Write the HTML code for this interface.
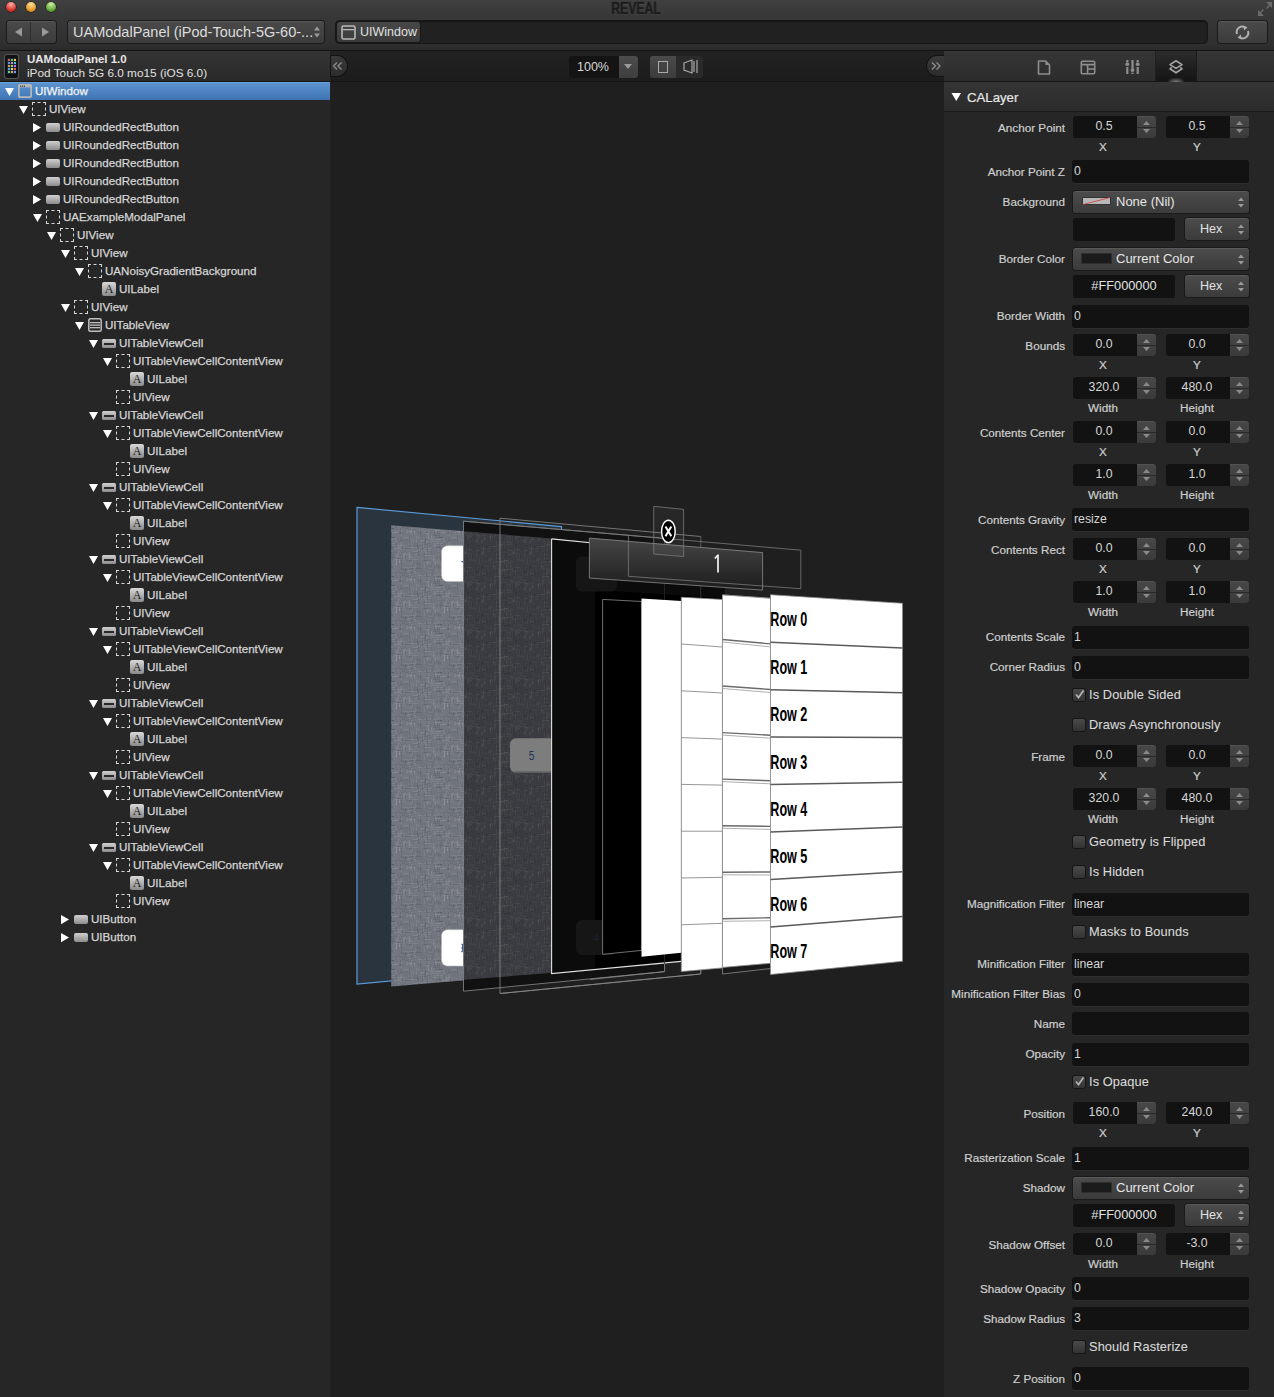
<!DOCTYPE html><html><head><meta charset="utf-8"><style>
*{margin:0;padding:0;box-sizing:border-box}
html,body{width:1274px;height:1397px;overflow:hidden;background:#1e1e1e;font-family:"Liberation Sans",sans-serif;position:relative}
.a{position:absolute}
.t{position:absolute;white-space:nowrap;line-height:1}
</style></head><body><div class="a" style="left:0;top:0;width:1274px;height:51px;background:linear-gradient(#404040,#383838 30%,#2f2f2f 90%,#2a2a2a);border-bottom:1px solid #141414"></div><div class="a" style="left:5.7px;top:1.6px;width:10.6px;height:10.6px;border-radius:50%;background:radial-gradient(circle at 50% 22%,#ffb0a8,#d0281e 72%);box-shadow:0 0 0 0.6px rgba(0,0,0,0.55)"></div><div class="a" style="left:25.7px;top:1.6px;width:10.6px;height:10.6px;border-radius:50%;background:radial-gradient(circle at 50% 22%,#ffe3a0,#e0901c 72%);box-shadow:0 0 0 0.6px rgba(0,0,0,0.55)"></div><div class="a" style="left:45.7px;top:1.6px;width:10.6px;height:10.6px;border-radius:50%;background:radial-gradient(circle at 50% 22%,#d0f0a8,#58a02e 72%);box-shadow:0 0 0 0.6px rgba(0,0,0,0.55)"></div><div class="t" style="left:596px;top:0px;width:80px;text-align:center;font-size:16.5px;font-weight:bold;color:#1c1c1c;-webkit-text-stroke:0.5px #1c1c1c;transform:scaleX(0.74);text-shadow:0 1px 0 rgba(255,255,255,0.10)">REVEAL</div><svg class="a" style="left:1257px;top:1px" width="16" height="16" viewBox="0 0 16 16"><g fill="#6a6a6a"><path d="M9 1h6v6l-2-2-3 3-1-1 3-3z"/><path d="M7 15H1V9l2 2 3-3 1 1-3 3z"/></g></svg><div class="a" style="left:7px;top:21px;width:49px;height:22px;border-radius:3px;background:linear-gradient(#4a4a4a,#3c3c3c);box-shadow:0 0 0 1px #1a1a1a,inset 0 1px 0 rgba(255,255,255,0.08)"></div><div class="a" style="left:30px;top:22px;width:1px;height:20px;background:#2e2e2e"></div><svg class="a" style="left:14px;top:26px" width="12" height="12"><path d="M1 6L8 1.5V10.5z" fill="#9a9a9a"/></svg><svg class="a" style="left:39px;top:26px" width="12" height="12"><path d="M10 6L3 1.5V10.5z" fill="#9a9a9a"/></svg><div class="a" style="left:68px;top:21px;width:256px;height:22px;border-radius:3px;background:linear-gradient(#4a4a4a,#3c3c3c);box-shadow:0 0 0 1px #1a1a1a,inset 0 1px 0 rgba(255,255,255,0.08)"></div><div class="t" style="left:73px;top:24.5px;font-size:14.5px;color:#dcdcdc">UAModalPanel (iPod-Touch-5G-60-...</div><svg class="a" style="left:313px;top:25px" width="8" height="14"><path d="M1 5.5L4 1.5 7 5.5zM1 8.5L4 12.5 7 8.5z" fill="#9a9a9a"/></svg><div class="a" style="left:336px;top:21px;width:871px;height:22px;border-radius:4px;background:#212121;box-shadow:0 0 0 1px #161616,inset 0 1px 1px rgba(0,0,0,0.4)"></div><div class="a" style="left:337px;top:22px;width:83px;height:20px;border-radius:3px;background:linear-gradient(#474747,#3b3b3b);box-shadow:0 0 0 1px #181818"></div><svg class="a" style="left:341px;top:25px" width="15" height="15" viewBox="0 0 15 15"><rect x="1" y="1" width="13" height="13" rx="1.5" fill="none" stroke="#b8b8b8" stroke-width="1.6"/><rect x="2" y="4" width="11" height="1.3" fill="#b8b8b8"/></svg><div class="t" style="left:360px;top:26px;font-size:12.5px;color:#e0e0e0">UIWindow</div><div class="a" style="left:1218px;top:21px;width:49px;height:22px;border-radius:3px;background:linear-gradient(#4a4a4a,#3c3c3c);box-shadow:0 0 0 1px #1a1a1a,inset 0 1px 0 rgba(255,255,255,0.08)"></div><svg class="a" style="left:1234px;top:24px" width="17" height="17" viewBox="0 0 17 17"><path d="M3 10A5.5 5.5 0 0 1 11.5 3.8" fill="none" stroke="#b0b0b0" stroke-width="2"/><path d="M14 7A5.5 5.5 0 0 1 5.5 13.2" fill="none" stroke="#b0b0b0" stroke-width="2"/><path d="M9.5 1.5L13.5 3.5 10 6.5z" fill="#b0b0b0"/><path d="M7.5 15.5L3.5 13.5 7 10.5z" fill="#b0b0b0"/></svg><div class="a" style="left:0;top:51px;width:330px;height:1346px;background:#262626"></div><div class="a" style="left:0;top:51px;width:330px;height:31px;background:linear-gradient(#343434,#2a2a2a);border-bottom:1px solid #171717"></div><div class="a" style="left:5px;top:55px;width:13px;height:23px;border-radius:2px;background:#111;box-shadow:0 0 0 1px #555"></div><div class="a" style="left:7px;top:58px;width:9px;height:16px;background:#1a2a3a"></div><div class="a" style="left:7.5px;top:59px;width:2px;height:2px;background:#e55"></div><div class="a" style="left:10.5px;top:59px;width:2px;height:2px;background:#5c5"></div><div class="a" style="left:13.5px;top:59px;width:2px;height:2px;background:#fc4"></div><div class="a" style="left:7.5px;top:62px;width:2px;height:2px;background:#59e"></div><div class="a" style="left:10.5px;top:62px;width:2px;height:2px;background:#e8a"></div><div class="a" style="left:13.5px;top:62px;width:2px;height:2px;background:#4cd"></div><div class="a" style="left:7.5px;top:65px;width:2px;height:2px;background:#f94"></div><div class="a" style="left:10.5px;top:65px;width:2px;height:2px;background:#9d5"></div><div class="a" style="left:13.5px;top:65px;width:2px;height:2px;background:#c6f"></div><div class="a" style="left:7.5px;top:68px;width:2px;height:2px;background:#5ae"></div><div class="a" style="left:10.5px;top:68px;width:2px;height:2px;background:#ed5"></div><div class="a" style="left:13.5px;top:68px;width:2px;height:2px;background:#e64"></div><div class="a" style="left:7.5px;top:71px;width:2px;height:2px;background:#6d9"></div><div class="a" style="left:10.5px;top:71px;width:2px;height:2px;background:#fa3"></div><div class="a" style="left:13.5px;top:71px;width:2px;height:2px;background:#79f"></div><div class="t" style="left:27px;top:54px;font-size:11.5px;font-weight:bold;color:#e6e6e6">UAModalPanel 1.0</div><div class="t" style="left:27px;top:68px;font-size:11.8px;color:#e0e0e0">iPod Touch 5G 6.0 mo15 (iOS 6.0)</div><div class="a" style="left:0;top:82px;width:330px;height:18px;background:linear-gradient(#5b93cf,#3f74b4);border-top:1px solid #6aa2dc"></div><svg class="a" style="left:5px;top:87px" width="10" height="10"><path d="M0 1H9L4.5 9z" fill="#fff"/></svg><svg class="a" style="left:18px;top:84px" width="14" height="14" viewBox="0 0 14 14"><rect x="0.8" y="0.8" width="12.4" height="12.4" rx="1.5" fill="none" stroke="#b8b8b8" stroke-width="1.8"/><rect x="1" y="1" width="12" height="2.4" fill="#b8b8b8"/><circle cx="2.8" cy="2.2" r="0.6" fill="#222"/><circle cx="4.6" cy="2.2" r="0.6" fill="#222"/><circle cx="6.4" cy="2.2" r="0.6" fill="#222"/></svg><div class="t" style="left:35px;top:85.4px;font-size:11.6px;letter-spacing:0px;color:#f4f4f4;-webkit-text-stroke:0.25px #f4f4f4">UIWindow</div><svg class="a" style="left:19px;top:105px" width="10" height="10"><path d="M0 1H9L4.5 9z" fill="#fff"/></svg><div class="a" style="left:32px;top:102px;width:14px;height:14px;border:1px dashed #d8d8d8"></div><div class="t" style="left:49px;top:103.4px;font-size:11.6px;letter-spacing:0px;color:#d6d6d6;-webkit-text-stroke:0.25px #d6d6d6">UIView</div><svg class="a" style="left:33px;top:123px" width="10" height="10"><path d="M0 0V9.2L8 4.6z" fill="#fff"/></svg><div class="a" style="left:46px;top:123px;width:14px;height:9px;border-radius:2px;background:linear-gradient(#cfcfcf,#8c8c8c)"></div><div class="t" style="left:63px;top:121.4px;font-size:11.6px;letter-spacing:0px;color:#d6d6d6;-webkit-text-stroke:0.25px #d6d6d6">UIRoundedRectButton</div><svg class="a" style="left:33px;top:141px" width="10" height="10"><path d="M0 0V9.2L8 4.6z" fill="#fff"/></svg><div class="a" style="left:46px;top:141px;width:14px;height:9px;border-radius:2px;background:linear-gradient(#cfcfcf,#8c8c8c)"></div><div class="t" style="left:63px;top:139.4px;font-size:11.6px;letter-spacing:0px;color:#d6d6d6;-webkit-text-stroke:0.25px #d6d6d6">UIRoundedRectButton</div><svg class="a" style="left:33px;top:159px" width="10" height="10"><path d="M0 0V9.2L8 4.6z" fill="#fff"/></svg><div class="a" style="left:46px;top:159px;width:14px;height:9px;border-radius:2px;background:linear-gradient(#cfcfcf,#8c8c8c)"></div><div class="t" style="left:63px;top:157.4px;font-size:11.6px;letter-spacing:0px;color:#d6d6d6;-webkit-text-stroke:0.25px #d6d6d6">UIRoundedRectButton</div><svg class="a" style="left:33px;top:177px" width="10" height="10"><path d="M0 0V9.2L8 4.6z" fill="#fff"/></svg><div class="a" style="left:46px;top:177px;width:14px;height:9px;border-radius:2px;background:linear-gradient(#cfcfcf,#8c8c8c)"></div><div class="t" style="left:63px;top:175.4px;font-size:11.6px;letter-spacing:0px;color:#d6d6d6;-webkit-text-stroke:0.25px #d6d6d6">UIRoundedRectButton</div><svg class="a" style="left:33px;top:195px" width="10" height="10"><path d="M0 0V9.2L8 4.6z" fill="#fff"/></svg><div class="a" style="left:46px;top:195px;width:14px;height:9px;border-radius:2px;background:linear-gradient(#cfcfcf,#8c8c8c)"></div><div class="t" style="left:63px;top:193.4px;font-size:11.6px;letter-spacing:0px;color:#d6d6d6;-webkit-text-stroke:0.25px #d6d6d6">UIRoundedRectButton</div><svg class="a" style="left:33px;top:213px" width="10" height="10"><path d="M0 1H9L4.5 9z" fill="#fff"/></svg><div class="a" style="left:46px;top:210px;width:14px;height:14px;border:1px dashed #d8d8d8"></div><div class="t" style="left:63px;top:211.4px;font-size:11.6px;letter-spacing:0px;color:#d6d6d6;-webkit-text-stroke:0.25px #d6d6d6">UAExampleModalPanel</div><svg class="a" style="left:47px;top:231px" width="10" height="10"><path d="M0 1H9L4.5 9z" fill="#fff"/></svg><div class="a" style="left:60px;top:228px;width:14px;height:14px;border:1px dashed #d8d8d8"></div><div class="t" style="left:77px;top:229.4px;font-size:11.6px;letter-spacing:0px;color:#d6d6d6;-webkit-text-stroke:0.25px #d6d6d6">UIView</div><svg class="a" style="left:61px;top:249px" width="10" height="10"><path d="M0 1H9L4.5 9z" fill="#fff"/></svg><div class="a" style="left:74px;top:246px;width:14px;height:14px;border:1px dashed #d8d8d8"></div><div class="t" style="left:91px;top:247.4px;font-size:11.6px;letter-spacing:0px;color:#d6d6d6;-webkit-text-stroke:0.25px #d6d6d6">UIView</div><svg class="a" style="left:75px;top:267px" width="10" height="10"><path d="M0 1H9L4.5 9z" fill="#fff"/></svg><div class="a" style="left:88px;top:264px;width:14px;height:14px;border:1px dashed #d8d8d8"></div><div class="t" style="left:105px;top:265.4px;font-size:11.6px;letter-spacing:0px;color:#d6d6d6;-webkit-text-stroke:0.25px #d6d6d6">UANoisyGradientBackground</div><div class="a" style="left:102px;top:282px;width:14px;height:14px;border-radius:2px;background:linear-gradient(#d8d8d8,#8a8a8a)"></div><div class="t" style="left:104px;top:283px;width:10px;text-align:center;font-family:'Liberation Serif',serif;font-size:12px;color:#202020">A</div><div class="t" style="left:119px;top:283.4px;font-size:11.6px;letter-spacing:0px;color:#d6d6d6;-webkit-text-stroke:0.25px #d6d6d6">UILabel</div><svg class="a" style="left:61px;top:303px" width="10" height="10"><path d="M0 1H9L4.5 9z" fill="#fff"/></svg><div class="a" style="left:74px;top:300px;width:14px;height:14px;border:1px dashed #d8d8d8"></div><div class="t" style="left:91px;top:301.4px;font-size:11.6px;letter-spacing:0px;color:#d6d6d6;-webkit-text-stroke:0.25px #d6d6d6">UIView</div><svg class="a" style="left:75px;top:321px" width="10" height="10"><path d="M0 1H9L4.5 9z" fill="#fff"/></svg><svg class="a" style="left:88px;top:318px" width="14" height="14" viewBox="0 0 14 14"><rect x="0.8" y="0.8" width="12.4" height="12.4" rx="1.5" fill="#2a2a2a" stroke="#bdbdbd" stroke-width="1.5"/><rect x="2" y="4" width="10" height="1.3" fill="#bdbdbd"/><rect x="2" y="6.5" width="10" height="1.3" fill="#bdbdbd"/><rect x="2" y="9" width="10" height="1.3" fill="#bdbdbd"/></svg><div class="t" style="left:105px;top:319.4px;font-size:11.6px;letter-spacing:0px;color:#d6d6d6;-webkit-text-stroke:0.25px #d6d6d6">UITableView</div><svg class="a" style="left:89px;top:339px" width="10" height="10"><path d="M0 1H9L4.5 9z" fill="#fff"/></svg><div class="a" style="left:102px;top:339px;width:14px;height:9px;border-radius:1.5px;background:linear-gradient(#cfcfcf,#8c8c8c)"></div><div class="a" style="left:104px;top:342.5px;width:10px;height:2px;background:#2a2a2a"></div><div class="t" style="left:119px;top:337.4px;font-size:11.6px;letter-spacing:0px;color:#d6d6d6;-webkit-text-stroke:0.25px #d6d6d6">UITableViewCell</div><svg class="a" style="left:103px;top:357px" width="10" height="10"><path d="M0 1H9L4.5 9z" fill="#fff"/></svg><div class="a" style="left:116px;top:354px;width:14px;height:14px;border:1px dashed #d8d8d8"></div><div class="t" style="left:133px;top:355.4px;font-size:11.6px;letter-spacing:0px;color:#d6d6d6;-webkit-text-stroke:0.25px #d6d6d6">UITableViewCellContentView</div><div class="a" style="left:130px;top:372px;width:14px;height:14px;border-radius:2px;background:linear-gradient(#d8d8d8,#8a8a8a)"></div><div class="t" style="left:132px;top:373px;width:10px;text-align:center;font-family:'Liberation Serif',serif;font-size:12px;color:#202020">A</div><div class="t" style="left:147px;top:373.4px;font-size:11.6px;letter-spacing:0px;color:#d6d6d6;-webkit-text-stroke:0.25px #d6d6d6">UILabel</div><div class="a" style="left:116px;top:390px;width:14px;height:14px;border:1px dashed #d8d8d8"></div><div class="t" style="left:133px;top:391.4px;font-size:11.6px;letter-spacing:0px;color:#d6d6d6;-webkit-text-stroke:0.25px #d6d6d6">UIView</div><svg class="a" style="left:89px;top:411px" width="10" height="10"><path d="M0 1H9L4.5 9z" fill="#fff"/></svg><div class="a" style="left:102px;top:411px;width:14px;height:9px;border-radius:1.5px;background:linear-gradient(#cfcfcf,#8c8c8c)"></div><div class="a" style="left:104px;top:414.5px;width:10px;height:2px;background:#2a2a2a"></div><div class="t" style="left:119px;top:409.4px;font-size:11.6px;letter-spacing:0px;color:#d6d6d6;-webkit-text-stroke:0.25px #d6d6d6">UITableViewCell</div><svg class="a" style="left:103px;top:429px" width="10" height="10"><path d="M0 1H9L4.5 9z" fill="#fff"/></svg><div class="a" style="left:116px;top:426px;width:14px;height:14px;border:1px dashed #d8d8d8"></div><div class="t" style="left:133px;top:427.4px;font-size:11.6px;letter-spacing:0px;color:#d6d6d6;-webkit-text-stroke:0.25px #d6d6d6">UITableViewCellContentView</div><div class="a" style="left:130px;top:444px;width:14px;height:14px;border-radius:2px;background:linear-gradient(#d8d8d8,#8a8a8a)"></div><div class="t" style="left:132px;top:445px;width:10px;text-align:center;font-family:'Liberation Serif',serif;font-size:12px;color:#202020">A</div><div class="t" style="left:147px;top:445.4px;font-size:11.6px;letter-spacing:0px;color:#d6d6d6;-webkit-text-stroke:0.25px #d6d6d6">UILabel</div><div class="a" style="left:116px;top:462px;width:14px;height:14px;border:1px dashed #d8d8d8"></div><div class="t" style="left:133px;top:463.4px;font-size:11.6px;letter-spacing:0px;color:#d6d6d6;-webkit-text-stroke:0.25px #d6d6d6">UIView</div><svg class="a" style="left:89px;top:483px" width="10" height="10"><path d="M0 1H9L4.5 9z" fill="#fff"/></svg><div class="a" style="left:102px;top:483px;width:14px;height:9px;border-radius:1.5px;background:linear-gradient(#cfcfcf,#8c8c8c)"></div><div class="a" style="left:104px;top:486.5px;width:10px;height:2px;background:#2a2a2a"></div><div class="t" style="left:119px;top:481.4px;font-size:11.6px;letter-spacing:0px;color:#d6d6d6;-webkit-text-stroke:0.25px #d6d6d6">UITableViewCell</div><svg class="a" style="left:103px;top:501px" width="10" height="10"><path d="M0 1H9L4.5 9z" fill="#fff"/></svg><div class="a" style="left:116px;top:498px;width:14px;height:14px;border:1px dashed #d8d8d8"></div><div class="t" style="left:133px;top:499.4px;font-size:11.6px;letter-spacing:0px;color:#d6d6d6;-webkit-text-stroke:0.25px #d6d6d6">UITableViewCellContentView</div><div class="a" style="left:130px;top:516px;width:14px;height:14px;border-radius:2px;background:linear-gradient(#d8d8d8,#8a8a8a)"></div><div class="t" style="left:132px;top:517px;width:10px;text-align:center;font-family:'Liberation Serif',serif;font-size:12px;color:#202020">A</div><div class="t" style="left:147px;top:517.4px;font-size:11.6px;letter-spacing:0px;color:#d6d6d6;-webkit-text-stroke:0.25px #d6d6d6">UILabel</div><div class="a" style="left:116px;top:534px;width:14px;height:14px;border:1px dashed #d8d8d8"></div><div class="t" style="left:133px;top:535.4px;font-size:11.6px;letter-spacing:0px;color:#d6d6d6;-webkit-text-stroke:0.25px #d6d6d6">UIView</div><svg class="a" style="left:89px;top:555px" width="10" height="10"><path d="M0 1H9L4.5 9z" fill="#fff"/></svg><div class="a" style="left:102px;top:555px;width:14px;height:9px;border-radius:1.5px;background:linear-gradient(#cfcfcf,#8c8c8c)"></div><div class="a" style="left:104px;top:558.5px;width:10px;height:2px;background:#2a2a2a"></div><div class="t" style="left:119px;top:553.4px;font-size:11.6px;letter-spacing:0px;color:#d6d6d6;-webkit-text-stroke:0.25px #d6d6d6">UITableViewCell</div><svg class="a" style="left:103px;top:573px" width="10" height="10"><path d="M0 1H9L4.5 9z" fill="#fff"/></svg><div class="a" style="left:116px;top:570px;width:14px;height:14px;border:1px dashed #d8d8d8"></div><div class="t" style="left:133px;top:571.4px;font-size:11.6px;letter-spacing:0px;color:#d6d6d6;-webkit-text-stroke:0.25px #d6d6d6">UITableViewCellContentView</div><div class="a" style="left:130px;top:588px;width:14px;height:14px;border-radius:2px;background:linear-gradient(#d8d8d8,#8a8a8a)"></div><div class="t" style="left:132px;top:589px;width:10px;text-align:center;font-family:'Liberation Serif',serif;font-size:12px;color:#202020">A</div><div class="t" style="left:147px;top:589.4px;font-size:11.6px;letter-spacing:0px;color:#d6d6d6;-webkit-text-stroke:0.25px #d6d6d6">UILabel</div><div class="a" style="left:116px;top:606px;width:14px;height:14px;border:1px dashed #d8d8d8"></div><div class="t" style="left:133px;top:607.4px;font-size:11.6px;letter-spacing:0px;color:#d6d6d6;-webkit-text-stroke:0.25px #d6d6d6">UIView</div><svg class="a" style="left:89px;top:627px" width="10" height="10"><path d="M0 1H9L4.5 9z" fill="#fff"/></svg><div class="a" style="left:102px;top:627px;width:14px;height:9px;border-radius:1.5px;background:linear-gradient(#cfcfcf,#8c8c8c)"></div><div class="a" style="left:104px;top:630.5px;width:10px;height:2px;background:#2a2a2a"></div><div class="t" style="left:119px;top:625.4px;font-size:11.6px;letter-spacing:0px;color:#d6d6d6;-webkit-text-stroke:0.25px #d6d6d6">UITableViewCell</div><svg class="a" style="left:103px;top:645px" width="10" height="10"><path d="M0 1H9L4.5 9z" fill="#fff"/></svg><div class="a" style="left:116px;top:642px;width:14px;height:14px;border:1px dashed #d8d8d8"></div><div class="t" style="left:133px;top:643.4px;font-size:11.6px;letter-spacing:0px;color:#d6d6d6;-webkit-text-stroke:0.25px #d6d6d6">UITableViewCellContentView</div><div class="a" style="left:130px;top:660px;width:14px;height:14px;border-radius:2px;background:linear-gradient(#d8d8d8,#8a8a8a)"></div><div class="t" style="left:132px;top:661px;width:10px;text-align:center;font-family:'Liberation Serif',serif;font-size:12px;color:#202020">A</div><div class="t" style="left:147px;top:661.4px;font-size:11.6px;letter-spacing:0px;color:#d6d6d6;-webkit-text-stroke:0.25px #d6d6d6">UILabel</div><div class="a" style="left:116px;top:678px;width:14px;height:14px;border:1px dashed #d8d8d8"></div><div class="t" style="left:133px;top:679.4px;font-size:11.6px;letter-spacing:0px;color:#d6d6d6;-webkit-text-stroke:0.25px #d6d6d6">UIView</div><svg class="a" style="left:89px;top:699px" width="10" height="10"><path d="M0 1H9L4.5 9z" fill="#fff"/></svg><div class="a" style="left:102px;top:699px;width:14px;height:9px;border-radius:1.5px;background:linear-gradient(#cfcfcf,#8c8c8c)"></div><div class="a" style="left:104px;top:702.5px;width:10px;height:2px;background:#2a2a2a"></div><div class="t" style="left:119px;top:697.4px;font-size:11.6px;letter-spacing:0px;color:#d6d6d6;-webkit-text-stroke:0.25px #d6d6d6">UITableViewCell</div><svg class="a" style="left:103px;top:717px" width="10" height="10"><path d="M0 1H9L4.5 9z" fill="#fff"/></svg><div class="a" style="left:116px;top:714px;width:14px;height:14px;border:1px dashed #d8d8d8"></div><div class="t" style="left:133px;top:715.4px;font-size:11.6px;letter-spacing:0px;color:#d6d6d6;-webkit-text-stroke:0.25px #d6d6d6">UITableViewCellContentView</div><div class="a" style="left:130px;top:732px;width:14px;height:14px;border-radius:2px;background:linear-gradient(#d8d8d8,#8a8a8a)"></div><div class="t" style="left:132px;top:733px;width:10px;text-align:center;font-family:'Liberation Serif',serif;font-size:12px;color:#202020">A</div><div class="t" style="left:147px;top:733.4px;font-size:11.6px;letter-spacing:0px;color:#d6d6d6;-webkit-text-stroke:0.25px #d6d6d6">UILabel</div><div class="a" style="left:116px;top:750px;width:14px;height:14px;border:1px dashed #d8d8d8"></div><div class="t" style="left:133px;top:751.4px;font-size:11.6px;letter-spacing:0px;color:#d6d6d6;-webkit-text-stroke:0.25px #d6d6d6">UIView</div><svg class="a" style="left:89px;top:771px" width="10" height="10"><path d="M0 1H9L4.5 9z" fill="#fff"/></svg><div class="a" style="left:102px;top:771px;width:14px;height:9px;border-radius:1.5px;background:linear-gradient(#cfcfcf,#8c8c8c)"></div><div class="a" style="left:104px;top:774.5px;width:10px;height:2px;background:#2a2a2a"></div><div class="t" style="left:119px;top:769.4px;font-size:11.6px;letter-spacing:0px;color:#d6d6d6;-webkit-text-stroke:0.25px #d6d6d6">UITableViewCell</div><svg class="a" style="left:103px;top:789px" width="10" height="10"><path d="M0 1H9L4.5 9z" fill="#fff"/></svg><div class="a" style="left:116px;top:786px;width:14px;height:14px;border:1px dashed #d8d8d8"></div><div class="t" style="left:133px;top:787.4px;font-size:11.6px;letter-spacing:0px;color:#d6d6d6;-webkit-text-stroke:0.25px #d6d6d6">UITableViewCellContentView</div><div class="a" style="left:130px;top:804px;width:14px;height:14px;border-radius:2px;background:linear-gradient(#d8d8d8,#8a8a8a)"></div><div class="t" style="left:132px;top:805px;width:10px;text-align:center;font-family:'Liberation Serif',serif;font-size:12px;color:#202020">A</div><div class="t" style="left:147px;top:805.4px;font-size:11.6px;letter-spacing:0px;color:#d6d6d6;-webkit-text-stroke:0.25px #d6d6d6">UILabel</div><div class="a" style="left:116px;top:822px;width:14px;height:14px;border:1px dashed #d8d8d8"></div><div class="t" style="left:133px;top:823.4px;font-size:11.6px;letter-spacing:0px;color:#d6d6d6;-webkit-text-stroke:0.25px #d6d6d6">UIView</div><svg class="a" style="left:89px;top:843px" width="10" height="10"><path d="M0 1H9L4.5 9z" fill="#fff"/></svg><div class="a" style="left:102px;top:843px;width:14px;height:9px;border-radius:1.5px;background:linear-gradient(#cfcfcf,#8c8c8c)"></div><div class="a" style="left:104px;top:846.5px;width:10px;height:2px;background:#2a2a2a"></div><div class="t" style="left:119px;top:841.4px;font-size:11.6px;letter-spacing:0px;color:#d6d6d6;-webkit-text-stroke:0.25px #d6d6d6">UITableViewCell</div><svg class="a" style="left:103px;top:861px" width="10" height="10"><path d="M0 1H9L4.5 9z" fill="#fff"/></svg><div class="a" style="left:116px;top:858px;width:14px;height:14px;border:1px dashed #d8d8d8"></div><div class="t" style="left:133px;top:859.4px;font-size:11.6px;letter-spacing:0px;color:#d6d6d6;-webkit-text-stroke:0.25px #d6d6d6">UITableViewCellContentView</div><div class="a" style="left:130px;top:876px;width:14px;height:14px;border-radius:2px;background:linear-gradient(#d8d8d8,#8a8a8a)"></div><div class="t" style="left:132px;top:877px;width:10px;text-align:center;font-family:'Liberation Serif',serif;font-size:12px;color:#202020">A</div><div class="t" style="left:147px;top:877.4px;font-size:11.6px;letter-spacing:0px;color:#d6d6d6;-webkit-text-stroke:0.25px #d6d6d6">UILabel</div><div class="a" style="left:116px;top:894px;width:14px;height:14px;border:1px dashed #d8d8d8"></div><div class="t" style="left:133px;top:895.4px;font-size:11.6px;letter-spacing:0px;color:#d6d6d6;-webkit-text-stroke:0.25px #d6d6d6">UIView</div><svg class="a" style="left:61px;top:915px" width="10" height="10"><path d="M0 0V9.2L8 4.6z" fill="#fff"/></svg><div class="a" style="left:74px;top:915px;width:14px;height:9px;border-radius:2px;background:linear-gradient(#cfcfcf,#8c8c8c)"></div><div class="t" style="left:91px;top:913.4px;font-size:11.6px;letter-spacing:0px;color:#d6d6d6;-webkit-text-stroke:0.25px #d6d6d6">UIButton</div><svg class="a" style="left:61px;top:933px" width="10" height="10"><path d="M0 0V9.2L8 4.6z" fill="#fff"/></svg><div class="a" style="left:74px;top:933px;width:14px;height:9px;border-radius:2px;background:linear-gradient(#cfcfcf,#8c8c8c)"></div><div class="t" style="left:91px;top:931.4px;font-size:11.6px;letter-spacing:0px;color:#d6d6d6;-webkit-text-stroke:0.25px #d6d6d6">UIButton</div><div class="a" style="left:330px;top:51px;width:614px;height:1346px;background:#1f1f1f;box-shadow:inset 1px 0 0 #222"></div><div class="a" style="left:331px;top:51px;width:613px;height:31px;background:linear-gradient(#222,#1c1c1c);border-bottom:1px solid #151515"></div><div class="a" style="left:331px;top:56px;width:16px;height:20px;border-radius:0 10px 10px 0;background:linear-gradient(#3a3a3a,#2c2c2c);box-shadow:0 0 0 1px #121212"></div><svg class="a" style="left:332px;top:61px" width="12" height="10"><path d="M5 1.5L1.5 5 5 8.5M9.5 1.5L6 5 9.5 8.5" fill="none" stroke="#8c8c8c" stroke-width="1.4"/></svg><div class="a" style="left:927px;top:56px;width:17px;height:20px;border-radius:10px 0 0 10px;background:linear-gradient(#3a3a3a,#2c2c2c);box-shadow:0 0 0 1px #121212"></div><svg class="a" style="left:930px;top:61px" width="12" height="10"><path d="M2 1.5L5.5 5 2 8.5M6.5 1.5L10 5 6.5 8.5" fill="none" stroke="#8c8c8c" stroke-width="1.4"/></svg><div class="a" style="left:569px;top:56px;width:69px;height:22px;border-radius:3px;background:#141414"></div><div class="a" style="left:619px;top:56px;width:19px;height:22px;border-radius:0 3px 3px 0;background:linear-gradient(#4c4c4c,#3e3e3e)"></div><svg class="a" style="left:623px;top:63px" width="10" height="8"><path d="M1 1H9L5 6z" fill="#9a9a9a"/></svg><div class="t" style="left:577px;top:61px;font-size:12.5px;color:#d8d8d8">100%</div><div class="a" style="left:650px;top:56px;width:53px;height:22px;border-radius:3px;background:#2a2a2a"></div><div class="a" style="left:650px;top:56px;width:26px;height:22px;border-radius:3px 0 0 3px;background:linear-gradient(#4a4a4a,#3c3c3c)"></div><div class="a" style="left:658px;top:61px;width:10px;height:12px;border:1.3px solid #aaa"></div><svg class="a" style="left:683px;top:59px" width="16" height="15" viewBox="0 0 16 15"><path d="M1 4L9 1V14L1 11z" fill="none" stroke="#a8a8a8" stroke-width="1.2"/><path d="M11 2V13M14 1V14" stroke="#a8a8a8" stroke-width="1.2"/></svg><svg class="a" style="left:0;top:0" width="1274" height="1397" viewBox="0 0 1274 1397"><defs><pattern id="linen" width="48" height="48" patternUnits="userSpaceOnUse"><rect width="48" height="48" fill="#72767f"/><rect x="20" y="9" width="1" height="5" fill="#000" opacity="0.028"/><rect x="23" y="37" width="2" height="1" fill="#000" opacity="0.037"/><rect x="26" y="4" width="1" height="3" fill="#fff" opacity="0.054"/><rect x="7" y="14" width="1" height="7" fill="#000" opacity="0.081"/><rect x="25" y="3" width="3" height="1" fill="#fff" opacity="0.082"/><rect x="9" y="34" width="1" height="2" fill="#000" opacity="0.058"/><rect x="6" y="37" width="1" height="6" fill="#000" opacity="0.046"/><rect x="4" y="36" width="1" height="2" fill="#000" opacity="0.054"/><rect x="20" y="29" width="6" height="1" fill="#000" opacity="0.046"/><rect x="11" y="44" width="3" height="1" fill="#fff" opacity="0.046"/><rect x="21" y="46" width="5" height="1" fill="#fff" opacity="0.090"/><rect x="26" y="10" width="4" height="1" fill="#fff" opacity="0.058"/><rect x="42" y="4" width="6" height="1" fill="#000" opacity="0.077"/><rect x="44" y="22" width="6" height="1" fill="#fff" opacity="0.078"/><rect x="5" y="17" width="1" height="5" fill="#000" opacity="0.028"/><rect x="19" y="41" width="6" height="1" fill="#000" opacity="0.073"/><rect x="24" y="42" width="4" height="1" fill="#fff" opacity="0.056"/><rect x="7" y="31" width="1" height="2" fill="#fff" opacity="0.045"/><rect x="25" y="25" width="1" height="5" fill="#fff" opacity="0.055"/><rect x="8" y="27" width="6" height="1" fill="#fff" opacity="0.053"/><rect x="24" y="14" width="1" height="3" fill="#fff" opacity="0.036"/><rect x="0" y="31" width="6" height="1" fill="#fff" opacity="0.044"/><rect x="34" y="23" width="1" height="6" fill="#000" opacity="0.081"/><rect x="32" y="39" width="1" height="7" fill="#000" opacity="0.027"/><rect x="43" y="35" width="5" height="1" fill="#fff" opacity="0.052"/><rect x="25" y="3" width="3" height="1" fill="#fff" opacity="0.040"/><rect x="21" y="38" width="1" height="2" fill="#fff" opacity="0.063"/><rect x="23" y="39" width="2" height="1" fill="#fff" opacity="0.040"/><rect x="40" y="16" width="4" height="1" fill="#000" opacity="0.052"/><rect x="31" y="29" width="5" height="1" fill="#fff" opacity="0.032"/><rect x="21" y="47" width="1" height="4" fill="#fff" opacity="0.071"/><rect x="13" y="33" width="4" height="1" fill="#fff" opacity="0.061"/><rect x="33" y="19" width="7" height="1" fill="#000" opacity="0.066"/><rect x="23" y="10" width="1" height="4" fill="#000" opacity="0.056"/><rect x="21" y="40" width="1" height="3" fill="#000" opacity="0.071"/><rect x="12" y="15" width="1" height="5" fill="#000" opacity="0.038"/><rect x="22" y="46" width="2" height="1" fill="#000" opacity="0.071"/><rect x="12" y="44" width="1" height="6" fill="#000" opacity="0.051"/><rect x="22" y="23" width="2" height="1" fill="#fff" opacity="0.041"/><rect x="13" y="30" width="6" height="1" fill="#000" opacity="0.061"/><rect x="41" y="22" width="1" height="7" fill="#fff" opacity="0.069"/><rect x="45" y="12" width="1" height="5" fill="#000" opacity="0.050"/><rect x="5" y="46" width="5" height="1" fill="#fff" opacity="0.074"/><rect x="10" y="10" width="3" height="1" fill="#fff" opacity="0.064"/><rect x="41" y="9" width="1" height="6" fill="#000" opacity="0.083"/><rect x="22" y="9" width="1" height="6" fill="#000" opacity="0.025"/><rect x="46" y="41" width="2" height="1" fill="#000" opacity="0.080"/><rect x="12" y="13" width="2" height="1" fill="#fff" opacity="0.045"/><rect x="37" y="20" width="4" height="1" fill="#000" opacity="0.074"/><rect x="47" y="22" width="1" height="5" fill="#000" opacity="0.073"/><rect x="32" y="8" width="1" height="6" fill="#fff" opacity="0.059"/><rect x="11" y="38" width="2" height="1" fill="#000" opacity="0.033"/><rect x="39" y="46" width="1" height="2" fill="#000" opacity="0.044"/><rect x="35" y="30" width="2" height="1" fill="#000" opacity="0.027"/><rect x="2" y="6" width="1" height="6" fill="#fff" opacity="0.028"/><rect x="4" y="28" width="1" height="4" fill="#000" opacity="0.054"/><rect x="44" y="17" width="1" height="5" fill="#000" opacity="0.072"/><rect x="15" y="44" width="6" height="1" fill="#000" opacity="0.081"/><rect x="35" y="12" width="5" height="1" fill="#fff" opacity="0.034"/><rect x="4" y="42" width="3" height="1" fill="#fff" opacity="0.040"/><rect x="7" y="9" width="7" height="1" fill="#000" opacity="0.046"/><rect x="8" y="29" width="1" height="3" fill="#000" opacity="0.030"/><rect x="10" y="42" width="1" height="3" fill="#fff" opacity="0.054"/><rect x="21" y="26" width="3" height="1" fill="#fff" opacity="0.032"/><rect x="21" y="35" width="5" height="1" fill="#fff" opacity="0.027"/><rect x="39" y="18" width="1" height="6" fill="#000" opacity="0.031"/><rect x="14" y="6" width="1" height="2" fill="#fff" opacity="0.029"/><rect x="17" y="8" width="1" height="5" fill="#000" opacity="0.065"/><rect x="25" y="9" width="1" height="6" fill="#000" opacity="0.058"/><rect x="5" y="17" width="1" height="2" fill="#000" opacity="0.035"/><rect x="17" y="1" width="1" height="7" fill="#fff" opacity="0.043"/><rect x="14" y="4" width="4" height="1" fill="#000" opacity="0.051"/><rect x="35" y="26" width="1" height="4" fill="#000" opacity="0.027"/><rect x="7" y="10" width="4" height="1" fill="#fff" opacity="0.039"/><rect x="19" y="33" width="3" height="1" fill="#fff" opacity="0.059"/><rect x="22" y="1" width="1" height="4" fill="#fff" opacity="0.027"/><rect x="12" y="32" width="1" height="5" fill="#fff" opacity="0.055"/><rect x="41" y="27" width="7" height="1" fill="#fff" opacity="0.080"/><rect x="32" y="19" width="7" height="1" fill="#fff" opacity="0.041"/><rect x="45" y="46" width="1" height="7" fill="#fff" opacity="0.090"/><rect x="8" y="0" width="2" height="1" fill="#000" opacity="0.077"/><rect x="3" y="5" width="1" height="7" fill="#000" opacity="0.076"/><rect x="18" y="38" width="3" height="1" fill="#000" opacity="0.027"/><rect x="17" y="28" width="1" height="2" fill="#fff" opacity="0.089"/><rect x="35" y="20" width="3" height="1" fill="#fff" opacity="0.083"/><rect x="11" y="0" width="1" height="4" fill="#fff" opacity="0.057"/><rect x="12" y="15" width="1" height="6" fill="#000" opacity="0.029"/><rect x="9" y="25" width="6" height="1" fill="#fff" opacity="0.027"/><rect x="14" y="5" width="6" height="1" fill="#000" opacity="0.075"/><rect x="45" y="38" width="5" height="1" fill="#000" opacity="0.067"/><rect x="18" y="46" width="1" height="6" fill="#000" opacity="0.027"/><rect x="32" y="40" width="5" height="1" fill="#000" opacity="0.073"/><rect x="33" y="32" width="1" height="6" fill="#000" opacity="0.072"/><rect x="37" y="45" width="7" height="1" fill="#000" opacity="0.063"/><rect x="2" y="8" width="1" height="7" fill="#fff" opacity="0.033"/><rect x="35" y="3" width="7" height="1" fill="#fff" opacity="0.061"/><rect x="16" y="0" width="1" height="5" fill="#000" opacity="0.069"/><rect x="34" y="5" width="7" height="1" fill="#000" opacity="0.069"/><rect x="4" y="16" width="1" height="3" fill="#000" opacity="0.036"/><rect x="29" y="31" width="5" height="1" fill="#fff" opacity="0.085"/><rect x="2" y="39" width="7" height="1" fill="#000" opacity="0.029"/><rect x="16" y="41" width="7" height="1" fill="#000" opacity="0.061"/><rect x="30" y="3" width="1" height="5" fill="#fff" opacity="0.070"/><rect x="43" y="31" width="4" height="1" fill="#000" opacity="0.041"/><rect x="7" y="35" width="3" height="1" fill="#fff" opacity="0.032"/><rect x="18" y="29" width="2" height="1" fill="#000" opacity="0.082"/><rect x="17" y="24" width="3" height="1" fill="#000" opacity="0.080"/><rect x="5" y="9" width="7" height="1" fill="#000" opacity="0.081"/><rect x="40" y="32" width="4" height="1" fill="#000" opacity="0.066"/><rect x="31" y="25" width="1" height="2" fill="#fff" opacity="0.088"/><rect x="25" y="19" width="7" height="1" fill="#fff" opacity="0.048"/><rect x="21" y="0" width="4" height="1" fill="#000" opacity="0.074"/><rect x="12" y="45" width="2" height="1" fill="#000" opacity="0.041"/><rect x="25" y="24" width="1" height="6" fill="#fff" opacity="0.086"/><rect x="3" y="17" width="1" height="2" fill="#fff" opacity="0.069"/><rect x="9" y="15" width="1" height="4" fill="#fff" opacity="0.047"/><rect x="27" y="1" width="1" height="7" fill="#fff" opacity="0.083"/><rect x="13" y="46" width="2" height="1" fill="#fff" opacity="0.074"/><rect x="8" y="41" width="1" height="4" fill="#fff" opacity="0.085"/><rect x="10" y="30" width="1" height="5" fill="#fff" opacity="0.045"/><rect x="41" y="16" width="1" height="5" fill="#000" opacity="0.042"/><rect x="25" y="7" width="1" height="3" fill="#000" opacity="0.029"/><rect x="31" y="35" width="1" height="3" fill="#fff" opacity="0.048"/><rect x="27" y="8" width="6" height="1" fill="#fff" opacity="0.032"/><rect x="5" y="20" width="3" height="1" fill="#fff" opacity="0.079"/><rect x="1" y="47" width="5" height="1" fill="#fff" opacity="0.074"/><rect x="17" y="21" width="2" height="1" fill="#fff" opacity="0.063"/><rect x="43" y="32" width="6" height="1" fill="#000" opacity="0.076"/><rect x="17" y="15" width="1" height="5" fill="#fff" opacity="0.055"/><rect x="1" y="8" width="1" height="2" fill="#fff" opacity="0.076"/><rect x="37" y="31" width="1" height="2" fill="#fff" opacity="0.086"/><rect x="33" y="29" width="5" height="1" fill="#fff" opacity="0.033"/><rect x="33" y="43" width="1" height="2" fill="#000" opacity="0.067"/><rect x="29" y="5" width="6" height="1" fill="#000" opacity="0.024"/><rect x="36" y="2" width="1" height="7" fill="#000" opacity="0.082"/><rect x="33" y="40" width="5" height="1" fill="#000" opacity="0.031"/><rect x="33" y="37" width="1" height="3" fill="#fff" opacity="0.041"/><rect x="0" y="34" width="4" height="1" fill="#000" opacity="0.041"/><rect x="15" y="30" width="1" height="6" fill="#fff" opacity="0.042"/><rect x="45" y="41" width="1" height="4" fill="#fff" opacity="0.039"/><rect x="41" y="26" width="1" height="2" fill="#fff" opacity="0.069"/><rect x="14" y="31" width="2" height="1" fill="#000" opacity="0.067"/><rect x="25" y="12" width="1" height="2" fill="#000" opacity="0.068"/><rect x="13" y="31" width="3" height="1" fill="#fff" opacity="0.079"/><rect x="14" y="16" width="1" height="4" fill="#fff" opacity="0.067"/><rect x="14" y="31" width="1" height="5" fill="#000" opacity="0.027"/><rect x="25" y="3" width="3" height="1" fill="#fff" opacity="0.065"/><rect x="45" y="3" width="1" height="3" fill="#fff" opacity="0.084"/><rect x="46" y="7" width="2" height="1" fill="#000" opacity="0.044"/><rect x="33" y="47" width="5" height="1" fill="#fff" opacity="0.069"/><rect x="23" y="21" width="5" height="1" fill="#fff" opacity="0.026"/><rect x="22" y="26" width="2" height="1" fill="#000" opacity="0.070"/><rect x="19" y="27" width="2" height="1" fill="#fff" opacity="0.057"/><rect x="28" y="12" width="4" height="1" fill="#fff" opacity="0.084"/><rect x="26" y="15" width="7" height="1" fill="#000" opacity="0.026"/><rect x="4" y="3" width="1" height="4" fill="#fff" opacity="0.030"/><rect x="23" y="17" width="4" height="1" fill="#000" opacity="0.061"/><rect x="45" y="44" width="1" height="4" fill="#000" opacity="0.042"/><rect x="38" y="40" width="2" height="1" fill="#fff" opacity="0.041"/><rect x="29" y="24" width="4" height="1" fill="#000" opacity="0.073"/><rect x="31" y="11" width="1" height="2" fill="#000" opacity="0.068"/><rect x="9" y="38" width="3" height="1" fill="#fff" opacity="0.047"/><rect x="38" y="5" width="6" height="1" fill="#fff" opacity="0.075"/><rect x="4" y="41" width="2" height="1" fill="#fff" opacity="0.061"/><rect x="27" y="6" width="2" height="1" fill="#fff" opacity="0.031"/><rect x="31" y="45" width="5" height="1" fill="#fff" opacity="0.035"/><rect x="43" y="15" width="1" height="7" fill="#000" opacity="0.070"/><rect x="18" y="18" width="1" height="4" fill="#000" opacity="0.046"/><rect x="12" y="28" width="3" height="1" fill="#fff" opacity="0.041"/><rect x="37" y="12" width="4" height="1" fill="#fff" opacity="0.042"/><rect x="33" y="14" width="1" height="7" fill="#000" opacity="0.063"/><rect x="6" y="0" width="5" height="1" fill="#000" opacity="0.038"/><rect x="23" y="2" width="1" height="4" fill="#fff" opacity="0.029"/><rect x="37" y="12" width="2" height="1" fill="#fff" opacity="0.082"/><rect x="16" y="42" width="1" height="2" fill="#fff" opacity="0.065"/><rect x="13" y="2" width="1" height="4" fill="#fff" opacity="0.029"/><rect x="2" y="38" width="7" height="1" fill="#000" opacity="0.036"/><rect x="20" y="26" width="7" height="1" fill="#fff" opacity="0.066"/><rect x="2" y="31" width="1" height="6" fill="#fff" opacity="0.053"/><rect x="42" y="35" width="3" height="1" fill="#000" opacity="0.029"/><rect x="44" y="17" width="5" height="1" fill="#000" opacity="0.064"/><rect x="3" y="19" width="7" height="1" fill="#000" opacity="0.045"/><rect x="23" y="41" width="1" height="3" fill="#fff" opacity="0.052"/><rect x="27" y="10" width="1" height="5" fill="#fff" opacity="0.032"/><rect x="23" y="29" width="3" height="1" fill="#fff" opacity="0.029"/><rect x="25" y="5" width="1" height="6" fill="#000" opacity="0.046"/><rect x="9" y="22" width="4" height="1" fill="#fff" opacity="0.037"/><rect x="24" y="31" width="3" height="1" fill="#fff" opacity="0.080"/><rect x="30" y="20" width="2" height="1" fill="#000" opacity="0.062"/><rect x="45" y="39" width="1" height="7" fill="#000" opacity="0.034"/><rect x="14" y="39" width="5" height="1" fill="#000" opacity="0.036"/><rect x="36" y="13" width="2" height="1" fill="#fff" opacity="0.060"/><rect x="7" y="9" width="3" height="1" fill="#000" opacity="0.073"/><rect x="35" y="43" width="2" height="1" fill="#000" opacity="0.043"/><rect x="29" y="35" width="7" height="1" fill="#000" opacity="0.063"/><rect x="15" y="27" width="5" height="1" fill="#000" opacity="0.051"/><rect x="1" y="0" width="6" height="1" fill="#000" opacity="0.052"/><rect x="39" y="29" width="3" height="1" fill="#000" opacity="0.048"/><rect x="22" y="27" width="1" height="4" fill="#fff" opacity="0.055"/><rect x="2" y="2" width="7" height="1" fill="#fff" opacity="0.086"/><rect x="46" y="32" width="2" height="1" fill="#fff" opacity="0.059"/><rect x="8" y="1" width="1" height="2" fill="#000" opacity="0.068"/><rect x="12" y="8" width="1" height="5" fill="#fff" opacity="0.079"/><rect x="43" y="46" width="1" height="3" fill="#fff" opacity="0.049"/><rect x="10" y="20" width="6" height="1" fill="#fff" opacity="0.079"/><rect x="32" y="30" width="3" height="1" fill="#000" opacity="0.061"/><rect x="23" y="2" width="1" height="3" fill="#fff" opacity="0.036"/><rect x="43" y="20" width="5" height="1" fill="#fff" opacity="0.077"/><rect x="33" y="3" width="7" height="1" fill="#000" opacity="0.082"/><rect x="33" y="37" width="1" height="7" fill="#000" opacity="0.030"/><rect x="40" y="25" width="1" height="7" fill="#000" opacity="0.040"/><rect x="36" y="9" width="4" height="1" fill="#fff" opacity="0.031"/><rect x="39" y="47" width="2" height="1" fill="#fff" opacity="0.060"/><rect x="37" y="42" width="4" height="1" fill="#000" opacity="0.069"/><rect x="18" y="39" width="1" height="7" fill="#fff" opacity="0.059"/><rect x="8" y="31" width="3" height="1" fill="#000" opacity="0.027"/><rect x="36" y="22" width="4" height="1" fill="#fff" opacity="0.049"/><rect x="37" y="19" width="1" height="6" fill="#fff" opacity="0.050"/><rect x="10" y="8" width="2" height="1" fill="#000" opacity="0.039"/><rect x="6" y="4" width="7" height="1" fill="#fff" opacity="0.069"/><rect x="16" y="0" width="2" height="1" fill="#000" opacity="0.058"/><rect x="41" y="37" width="5" height="1" fill="#000" opacity="0.055"/><rect x="10" y="0" width="2" height="1" fill="#fff" opacity="0.028"/><rect x="10" y="3" width="1" height="2" fill="#fff" opacity="0.062"/><rect x="9" y="26" width="1" height="3" fill="#000" opacity="0.063"/><rect x="26" y="39" width="1" height="3" fill="#000" opacity="0.028"/><rect x="46" y="30" width="7" height="1" fill="#000" opacity="0.047"/><rect x="29" y="5" width="1" height="7" fill="#000" opacity="0.035"/><rect x="16" y="14" width="1" height="7" fill="#fff" opacity="0.048"/><rect x="44" y="16" width="1" height="7" fill="#fff" opacity="0.067"/><rect x="43" y="33" width="1" height="4" fill="#fff" opacity="0.086"/><rect x="5" y="32" width="1" height="2" fill="#fff" opacity="0.085"/><rect x="12" y="10" width="7" height="1" fill="#000" opacity="0.036"/><rect x="38" y="15" width="1" height="5" fill="#000" opacity="0.062"/><rect x="42" y="34" width="5" height="1" fill="#fff" opacity="0.060"/><rect x="1" y="27" width="1" height="7" fill="#fff" opacity="0.084"/><rect x="25" y="39" width="6" height="1" fill="#fff" opacity="0.085"/><rect x="1" y="7" width="1" height="2" fill="#000" opacity="0.034"/><rect x="44" y="1" width="1" height="2" fill="#fff" opacity="0.071"/><rect x="44" y="4" width="1" height="7" fill="#fff" opacity="0.082"/><rect x="12" y="34" width="1" height="7" fill="#fff" opacity="0.082"/><rect x="24" y="6" width="3" height="1" fill="#fff" opacity="0.033"/><rect x="40" y="5" width="7" height="1" fill="#000" opacity="0.053"/><rect x="41" y="13" width="4" height="1" fill="#fff" opacity="0.054"/><rect x="16" y="18" width="2" height="1" fill="#000" opacity="0.046"/><rect x="38" y="32" width="5" height="1" fill="#000" opacity="0.061"/><rect x="26" y="1" width="5" height="1" fill="#000" opacity="0.030"/><rect x="3" y="34" width="6" height="1" fill="#fff" opacity="0.082"/><rect x="18" y="10" width="1" height="5" fill="#fff" opacity="0.039"/><rect x="3" y="0" width="1" height="4" fill="#fff" opacity="0.058"/><rect x="11" y="31" width="6" height="1" fill="#fff" opacity="0.080"/><rect x="10" y="18" width="3" height="1" fill="#000" opacity="0.038"/><rect x="40" y="5" width="1" height="5" fill="#000" opacity="0.066"/><rect x="40" y="20" width="1" height="4" fill="#fff" opacity="0.086"/><rect x="47" y="5" width="5" height="1" fill="#000" opacity="0.026"/><rect x="16" y="27" width="1" height="6" fill="#000" opacity="0.047"/><rect x="14" y="29" width="1" height="3" fill="#000" opacity="0.069"/><rect x="41" y="2" width="1" height="4" fill="#000" opacity="0.055"/><rect x="28" y="42" width="6" height="1" fill="#000" opacity="0.034"/><rect x="16" y="37" width="1" height="3" fill="#fff" opacity="0.056"/><rect x="15" y="32" width="1" height="3" fill="#fff" opacity="0.075"/><rect x="39" y="9" width="7" height="1" fill="#fff" opacity="0.042"/><rect x="33" y="22" width="3" height="1" fill="#fff" opacity="0.088"/><rect x="46" y="6" width="3" height="1" fill="#000" opacity="0.030"/><rect x="9" y="19" width="7" height="1" fill="#fff" opacity="0.044"/><rect x="6" y="17" width="3" height="1" fill="#000" opacity="0.052"/><rect x="27" y="44" width="3" height="1" fill="#000" opacity="0.062"/><rect x="9" y="16" width="6" height="1" fill="#000" opacity="0.024"/><rect x="27" y="44" width="1" height="6" fill="#000" opacity="0.063"/><rect x="42" y="46" width="1" height="7" fill="#000" opacity="0.070"/><rect x="14" y="43" width="3" height="1" fill="#000" opacity="0.051"/><rect x="40" y="44" width="2" height="1" fill="#000" opacity="0.039"/><rect x="45" y="40" width="3" height="1" fill="#fff" opacity="0.054"/><rect x="39" y="26" width="6" height="1" fill="#000" opacity="0.080"/><rect x="41" y="20" width="1" height="2" fill="#fff" opacity="0.058"/><rect x="2" y="16" width="1" height="6" fill="#fff" opacity="0.073"/><rect x="12" y="33" width="1" height="4" fill="#fff" opacity="0.063"/><rect x="45" y="30" width="6" height="1" fill="#fff" opacity="0.078"/><rect x="21" y="26" width="1" height="7" fill="#000" opacity="0.037"/><rect x="25" y="32" width="1" height="2" fill="#000" opacity="0.061"/><rect x="16" y="17" width="5" height="1" fill="#fff" opacity="0.027"/><rect x="26" y="40" width="7" height="1" fill="#000" opacity="0.059"/><rect x="19" y="47" width="5" height="1" fill="#000" opacity="0.056"/><rect x="25" y="29" width="3" height="1" fill="#fff" opacity="0.086"/><rect x="40" y="12" width="1" height="5" fill="#000" opacity="0.067"/><rect x="9" y="22" width="1" height="7" fill="#000" opacity="0.073"/><rect x="29" y="18" width="6" height="1" fill="#000" opacity="0.071"/><rect x="14" y="17" width="7" height="1" fill="#fff" opacity="0.042"/><rect x="11" y="30" width="2" height="1" fill="#000" opacity="0.072"/><rect x="41" y="19" width="1" height="4" fill="#fff" opacity="0.054"/><rect x="42" y="23" width="3" height="1" fill="#000" opacity="0.075"/><rect x="36" y="20" width="1" height="3" fill="#000" opacity="0.045"/><rect x="42" y="0" width="3" height="1" fill="#000" opacity="0.063"/><rect x="6" y="37" width="3" height="1" fill="#000" opacity="0.035"/><rect x="9" y="13" width="1" height="5" fill="#000" opacity="0.034"/><rect x="38" y="5" width="1" height="7" fill="#000" opacity="0.057"/><rect x="19" y="12" width="1" height="5" fill="#000" opacity="0.056"/><rect x="28" y="42" width="2" height="1" fill="#000" opacity="0.040"/><rect x="8" y="30" width="1" height="5" fill="#000" opacity="0.053"/><rect x="44" y="31" width="1" height="3" fill="#fff" opacity="0.061"/><rect x="0" y="10" width="1" height="4" fill="#fff" opacity="0.063"/><rect x="29" y="23" width="5" height="1" fill="#fff" opacity="0.088"/><rect x="40" y="23" width="7" height="1" fill="#000" opacity="0.025"/><rect x="47" y="21" width="1" height="2" fill="#000" opacity="0.053"/><rect x="2" y="13" width="7" height="1" fill="#fff" opacity="0.034"/><rect x="42" y="23" width="1" height="4" fill="#fff" opacity="0.060"/><rect x="13" y="18" width="5" height="1" fill="#fff" opacity="0.042"/><rect x="18" y="18" width="1" height="4" fill="#000" opacity="0.048"/><rect x="17" y="32" width="1" height="4" fill="#000" opacity="0.063"/><rect x="21" y="12" width="1" height="4" fill="#000" opacity="0.032"/><rect x="5" y="2" width="1" height="5" fill="#000" opacity="0.077"/><rect x="3" y="25" width="1" height="4" fill="#fff" opacity="0.029"/><rect x="30" y="38" width="1" height="7" fill="#fff" opacity="0.059"/><rect x="24" y="39" width="1" height="3" fill="#000" opacity="0.066"/><rect x="43" y="5" width="1" height="3" fill="#fff" opacity="0.067"/><rect x="11" y="6" width="1" height="7" fill="#fff" opacity="0.028"/><rect x="41" y="0" width="4" height="1" fill="#000" opacity="0.032"/><rect x="45" y="16" width="4" height="1" fill="#fff" opacity="0.028"/><rect x="36" y="41" width="1" height="6" fill="#000" opacity="0.027"/><rect x="2" y="7" width="5" height="1" fill="#000" opacity="0.079"/><rect x="0" y="43" width="1" height="5" fill="#000" opacity="0.084"/><rect x="9" y="30" width="5" height="1" fill="#000" opacity="0.029"/><rect x="9" y="40" width="1" height="2" fill="#fff" opacity="0.027"/><rect x="5" y="13" width="1" height="2" fill="#fff" opacity="0.027"/><rect x="15" y="28" width="7" height="1" fill="#000" opacity="0.079"/><rect x="47" y="45" width="7" height="1" fill="#000" opacity="0.068"/><rect x="40" y="35" width="1" height="7" fill="#fff" opacity="0.070"/><rect x="3" y="45" width="1" height="2" fill="#fff" opacity="0.027"/><rect x="39" y="5" width="5" height="1" fill="#fff" opacity="0.073"/><rect x="31" y="38" width="1" height="2" fill="#fff" opacity="0.088"/><rect x="30" y="43" width="3" height="1" fill="#fff" opacity="0.078"/><rect x="41" y="10" width="1" height="7" fill="#000" opacity="0.053"/><rect x="28" y="17" width="1" height="6" fill="#fff" opacity="0.044"/><rect x="41" y="45" width="1" height="6" fill="#fff" opacity="0.065"/><rect x="9" y="38" width="4" height="1" fill="#000" opacity="0.083"/><rect x="24" y="43" width="1" height="5" fill="#000" opacity="0.078"/><rect x="18" y="44" width="2" height="1" fill="#fff" opacity="0.043"/><rect x="2" y="18" width="1" height="3" fill="#000" opacity="0.076"/><rect x="17" y="35" width="1" height="7" fill="#000" opacity="0.054"/><rect x="34" y="35" width="1" height="5" fill="#000" opacity="0.036"/><rect x="14" y="19" width="1" height="6" fill="#fff" opacity="0.052"/><rect x="16" y="37" width="2" height="1" fill="#000" opacity="0.052"/><rect x="22" y="4" width="3" height="1" fill="#fff" opacity="0.060"/><rect x="33" y="20" width="5" height="1" fill="#000" opacity="0.036"/><rect x="5" y="11" width="7" height="1" fill="#fff" opacity="0.064"/><rect x="33" y="9" width="3" height="1" fill="#fff" opacity="0.091"/><rect x="6" y="23" width="7" height="1" fill="#fff" opacity="0.031"/><rect x="1" y="22" width="4" height="1" fill="#000" opacity="0.025"/><rect x="36" y="31" width="1" height="6" fill="#000" opacity="0.040"/><rect x="27" y="6" width="1" height="5" fill="#000" opacity="0.073"/><rect x="16" y="2" width="4" height="1" fill="#fff" opacity="0.038"/><rect x="3" y="2" width="6" height="1" fill="#fff" opacity="0.072"/><rect x="4" y="38" width="1" height="7" fill="#fff" opacity="0.034"/><rect x="16" y="20" width="1" height="6" fill="#fff" opacity="0.032"/><rect x="32" y="25" width="1" height="3" fill="#fff" opacity="0.036"/><rect x="46" y="14" width="3" height="1" fill="#fff" opacity="0.043"/><rect x="35" y="1" width="1" height="2" fill="#fff" opacity="0.059"/><rect x="30" y="3" width="1" height="2" fill="#fff" opacity="0.075"/><rect x="43" y="47" width="1" height="4" fill="#000" opacity="0.050"/><rect x="30" y="20" width="4" height="1" fill="#fff" opacity="0.034"/><rect x="10" y="28" width="1" height="3" fill="#000" opacity="0.079"/><rect x="29" y="45" width="1" height="3" fill="#000" opacity="0.033"/><rect x="4" y="39" width="4" height="1" fill="#000" opacity="0.032"/><rect x="6" y="24" width="2" height="1" fill="#000" opacity="0.051"/><rect x="14" y="30" width="2" height="1" fill="#000" opacity="0.033"/><rect x="3" y="11" width="7" height="1" fill="#fff" opacity="0.084"/><rect x="9" y="17" width="5" height="1" fill="#fff" opacity="0.036"/><rect x="18" y="21" width="3" height="1" fill="#fff" opacity="0.033"/><rect x="30" y="7" width="1" height="3" fill="#000" opacity="0.027"/><rect x="42" y="13" width="6" height="1" fill="#fff" opacity="0.045"/><rect x="12" y="23" width="1" height="5" fill="#000" opacity="0.084"/><rect x="6" y="24" width="1" height="4" fill="#fff" opacity="0.037"/><rect x="18" y="9" width="7" height="1" fill="#fff" opacity="0.078"/><rect x="8" y="28" width="2" height="1" fill="#000" opacity="0.081"/><rect x="23" y="27" width="1" height="2" fill="#000" opacity="0.037"/><rect x="8" y="11" width="6" height="1" fill="#000" opacity="0.067"/><rect x="5" y="5" width="6" height="1" fill="#000" opacity="0.070"/><rect x="8" y="39" width="1" height="7" fill="#000" opacity="0.073"/><rect x="12" y="0" width="1" height="2" fill="#000" opacity="0.055"/><rect x="3" y="33" width="1" height="4" fill="#fff" opacity="0.081"/><rect x="31" y="5" width="2" height="1" fill="#fff" opacity="0.076"/><rect x="42" y="17" width="3" height="1" fill="#fff" opacity="0.080"/><rect x="10" y="44" width="4" height="1" fill="#000" opacity="0.075"/><rect x="28" y="33" width="1" height="2" fill="#fff" opacity="0.072"/><rect x="20" y="45" width="5" height="1" fill="#000" opacity="0.078"/><rect x="6" y="46" width="1" height="5" fill="#fff" opacity="0.028"/><rect x="8" y="1" width="3" height="1" fill="#000" opacity="0.037"/><rect x="6" y="19" width="4" height="1" fill="#000" opacity="0.081"/><rect x="44" y="47" width="1" height="3" fill="#fff" opacity="0.080"/><rect x="29" y="33" width="1" height="3" fill="#000" opacity="0.030"/><rect x="45" y="11" width="1" height="2" fill="#fff" opacity="0.056"/><rect x="17" y="7" width="1" height="2" fill="#fff" opacity="0.083"/><rect x="14" y="14" width="3" height="1" fill="#000" opacity="0.052"/><rect x="1" y="40" width="1" height="5" fill="#000" opacity="0.060"/><rect x="2" y="25" width="2" height="1" fill="#000" opacity="0.044"/><rect x="21" y="45" width="1" height="5" fill="#000" opacity="0.058"/><rect x="20" y="25" width="1" height="6" fill="#fff" opacity="0.060"/><rect x="22" y="15" width="5" height="1" fill="#000" opacity="0.025"/><rect x="11" y="4" width="4" height="1" fill="#fff" opacity="0.059"/><rect x="8" y="26" width="1" height="5" fill="#000" opacity="0.080"/><rect x="2" y="2" width="1" height="7" fill="#000" opacity="0.079"/><rect x="40" y="34" width="1" height="2" fill="#000" opacity="0.039"/><rect x="27" y="15" width="1" height="2" fill="#fff" opacity="0.046"/><rect x="7" y="3" width="1" height="6" fill="#000" opacity="0.079"/><rect x="5" y="29" width="6" height="1" fill="#000" opacity="0.033"/><rect x="8" y="18" width="1" height="5" fill="#000" opacity="0.040"/><rect x="47" y="34" width="1" height="4" fill="#000" opacity="0.061"/><rect x="41" y="24" width="1" height="3" fill="#000" opacity="0.046"/><rect x="19" y="39" width="5" height="1" fill="#fff" opacity="0.046"/><rect x="14" y="12" width="6" height="1" fill="#000" opacity="0.082"/><rect x="22" y="10" width="3" height="1" fill="#fff" opacity="0.047"/><rect x="13" y="18" width="2" height="1" fill="#000" opacity="0.034"/><rect x="22" y="28" width="7" height="1" fill="#fff" opacity="0.051"/><rect x="47" y="6" width="1" height="6" fill="#fff" opacity="0.088"/><rect x="9" y="26" width="4" height="1" fill="#000" opacity="0.032"/><rect x="39" y="17" width="1" height="6" fill="#fff" opacity="0.082"/><rect x="30" y="17" width="7" height="1" fill="#000" opacity="0.079"/><rect x="6" y="0" width="5" height="1" fill="#000" opacity="0.059"/><rect x="36" y="9" width="1" height="5" fill="#000" opacity="0.041"/><rect x="7" y="24" width="5" height="1" fill="#000" opacity="0.041"/><rect x="22" y="25" width="6" height="1" fill="#000" opacity="0.047"/><rect x="47" y="31" width="5" height="1" fill="#fff" opacity="0.038"/><rect x="9" y="27" width="1" height="6" fill="#fff" opacity="0.041"/><rect x="21" y="20" width="6" height="1" fill="#000" opacity="0.082"/><rect x="27" y="0" width="2" height="1" fill="#fff" opacity="0.063"/><rect x="34" y="19" width="1" height="6" fill="#000" opacity="0.050"/><rect x="46" y="43" width="1" height="5" fill="#fff" opacity="0.049"/><rect x="22" y="28" width="2" height="1" fill="#000" opacity="0.056"/><rect x="23" y="32" width="5" height="1" fill="#000" opacity="0.080"/><rect x="12" y="26" width="1" height="5" fill="#fff" opacity="0.076"/><rect x="37" y="21" width="7" height="1" fill="#000" opacity="0.073"/><rect x="20" y="23" width="2" height="1" fill="#000" opacity="0.055"/><rect x="18" y="44" width="1" height="4" fill="#000" opacity="0.083"/><rect x="26" y="40" width="3" height="1" fill="#000" opacity="0.073"/><rect x="12" y="26" width="3" height="1" fill="#fff" opacity="0.063"/><rect x="36" y="40" width="7" height="1" fill="#000" opacity="0.066"/><rect x="0" y="19" width="7" height="1" fill="#000" opacity="0.024"/><rect x="6" y="37" width="2" height="1" fill="#000" opacity="0.036"/><rect x="35" y="36" width="1" height="4" fill="#000" opacity="0.078"/><rect x="9" y="36" width="3" height="1" fill="#fff" opacity="0.034"/><rect x="32" y="6" width="1" height="2" fill="#fff" opacity="0.037"/><rect x="29" y="39" width="5" height="1" fill="#000" opacity="0.028"/><rect x="37" y="20" width="3" height="1" fill="#000" opacity="0.045"/><rect x="17" y="40" width="2" height="1" fill="#000" opacity="0.081"/><rect x="12" y="28" width="1" height="6" fill="#fff" opacity="0.030"/><rect x="37" y="2" width="5" height="1" fill="#fff" opacity="0.041"/><rect x="10" y="37" width="1" height="3" fill="#fff" opacity="0.084"/><rect x="19" y="26" width="1" height="6" fill="#fff" opacity="0.084"/><rect x="4" y="15" width="7" height="1" fill="#fff" opacity="0.073"/><rect x="19" y="25" width="7" height="1" fill="#fff" opacity="0.078"/><rect x="11" y="10" width="1" height="4" fill="#fff" opacity="0.026"/><rect x="25" y="35" width="4" height="1" fill="#fff" opacity="0.061"/><rect x="25" y="41" width="1" height="2" fill="#000" opacity="0.049"/><rect x="35" y="15" width="5" height="1" fill="#fff" opacity="0.044"/><rect x="2" y="17" width="7" height="1" fill="#fff" opacity="0.078"/><rect x="8" y="5" width="3" height="1" fill="#fff" opacity="0.080"/><rect x="28" y="29" width="1" height="3" fill="#fff" opacity="0.049"/><rect x="24" y="40" width="1" height="6" fill="#fff" opacity="0.088"/><rect x="14" y="28" width="7" height="1" fill="#fff" opacity="0.072"/><rect x="28" y="37" width="1" height="4" fill="#000" opacity="0.048"/></pattern><pattern id="linend" width="48" height="48" patternUnits="userSpaceOnUse"><rect width="48" height="48" fill="#3b3c41"/><rect x="28" y="35" width="5" height="1" fill="#fff" opacity="0.044"/><rect x="32" y="30" width="7" height="1" fill="#000" opacity="0.029"/><rect x="9" y="5" width="6" height="1" fill="#000" opacity="0.055"/><rect x="25" y="28" width="1" height="7" fill="#000" opacity="0.053"/><rect x="33" y="4" width="1" height="2" fill="#fff" opacity="0.045"/><rect x="29" y="20" width="5" height="1" fill="#000" opacity="0.030"/><rect x="18" y="31" width="2" height="1" fill="#000" opacity="0.043"/><rect x="35" y="5" width="1" height="7" fill="#fff" opacity="0.041"/><rect x="1" y="4" width="1" height="6" fill="#000" opacity="0.040"/><rect x="24" y="4" width="2" height="1" fill="#000" opacity="0.020"/><rect x="3" y="30" width="5" height="1" fill="#000" opacity="0.040"/><rect x="40" y="12" width="7" height="1" fill="#fff" opacity="0.017"/><rect x="26" y="7" width="3" height="1" fill="#fff" opacity="0.018"/><rect x="31" y="11" width="7" height="1" fill="#000" opacity="0.042"/><rect x="46" y="8" width="5" height="1" fill="#000" opacity="0.026"/><rect x="13" y="0" width="1" height="4" fill="#000" opacity="0.069"/><rect x="1" y="13" width="1" height="3" fill="#fff" opacity="0.044"/><rect x="6" y="2" width="1" height="3" fill="#fff" opacity="0.023"/><rect x="21" y="18" width="1" height="5" fill="#fff" opacity="0.017"/><rect x="15" y="0" width="6" height="1" fill="#fff" opacity="0.036"/><rect x="37" y="30" width="1" height="6" fill="#fff" opacity="0.028"/><rect x="19" y="14" width="1" height="6" fill="#fff" opacity="0.021"/><rect x="35" y="12" width="1" height="7" fill="#000" opacity="0.064"/><rect x="26" y="3" width="2" height="1" fill="#fff" opacity="0.032"/><rect x="47" y="45" width="1" height="5" fill="#fff" opacity="0.043"/><rect x="18" y="33" width="3" height="1" fill="#000" opacity="0.069"/><rect x="30" y="35" width="7" height="1" fill="#000" opacity="0.051"/><rect x="13" y="47" width="2" height="1" fill="#fff" opacity="0.028"/><rect x="2" y="11" width="4" height="1" fill="#fff" opacity="0.034"/><rect x="23" y="8" width="1" height="5" fill="#000" opacity="0.053"/><rect x="37" y="8" width="1" height="6" fill="#fff" opacity="0.015"/><rect x="44" y="19" width="2" height="1" fill="#fff" opacity="0.036"/><rect x="46" y="19" width="4" height="1" fill="#fff" opacity="0.017"/><rect x="23" y="47" width="1" height="2" fill="#000" opacity="0.057"/><rect x="21" y="22" width="1" height="2" fill="#000" opacity="0.065"/><rect x="26" y="1" width="5" height="1" fill="#000" opacity="0.051"/><rect x="37" y="0" width="6" height="1" fill="#fff" opacity="0.017"/><rect x="16" y="26" width="1" height="7" fill="#fff" opacity="0.047"/><rect x="29" y="28" width="1" height="5" fill="#000" opacity="0.024"/><rect x="1" y="19" width="1" height="6" fill="#fff" opacity="0.015"/><rect x="7" y="31" width="1" height="6" fill="#000" opacity="0.044"/><rect x="23" y="19" width="3" height="1" fill="#000" opacity="0.030"/><rect x="21" y="42" width="5" height="1" fill="#fff" opacity="0.022"/><rect x="16" y="12" width="1" height="7" fill="#fff" opacity="0.042"/><rect x="13" y="24" width="3" height="1" fill="#000" opacity="0.036"/><rect x="31" y="22" width="2" height="1" fill="#000" opacity="0.068"/><rect x="10" y="7" width="1" height="5" fill="#fff" opacity="0.046"/><rect x="24" y="40" width="1" height="6" fill="#fff" opacity="0.025"/><rect x="39" y="28" width="1" height="4" fill="#fff" opacity="0.015"/><rect x="2" y="43" width="1" height="7" fill="#fff" opacity="0.026"/><rect x="36" y="1" width="7" height="1" fill="#fff" opacity="0.030"/><rect x="17" y="15" width="3" height="1" fill="#000" opacity="0.069"/><rect x="6" y="40" width="1" height="6" fill="#000" opacity="0.060"/><rect x="43" y="12" width="1" height="3" fill="#000" opacity="0.033"/><rect x="30" y="34" width="1" height="7" fill="#fff" opacity="0.022"/><rect x="34" y="44" width="6" height="1" fill="#000" opacity="0.070"/><rect x="44" y="14" width="2" height="1" fill="#fff" opacity="0.045"/><rect x="28" y="29" width="3" height="1" fill="#000" opacity="0.065"/><rect x="36" y="41" width="6" height="1" fill="#000" opacity="0.067"/><rect x="41" y="13" width="1" height="2" fill="#000" opacity="0.061"/><rect x="45" y="7" width="3" height="1" fill="#fff" opacity="0.028"/><rect x="19" y="34" width="4" height="1" fill="#fff" opacity="0.039"/><rect x="32" y="5" width="1" height="2" fill="#fff" opacity="0.033"/><rect x="31" y="1" width="1" height="3" fill="#000" opacity="0.023"/><rect x="11" y="34" width="4" height="1" fill="#000" opacity="0.066"/><rect x="33" y="46" width="1" height="6" fill="#000" opacity="0.054"/><rect x="31" y="37" width="1" height="7" fill="#fff" opacity="0.022"/><rect x="18" y="46" width="1" height="6" fill="#000" opacity="0.046"/><rect x="35" y="16" width="1" height="4" fill="#000" opacity="0.068"/><rect x="39" y="13" width="1" height="4" fill="#000" opacity="0.068"/><rect x="36" y="31" width="3" height="1" fill="#fff" opacity="0.018"/><rect x="24" y="1" width="6" height="1" fill="#000" opacity="0.046"/><rect x="36" y="7" width="1" height="5" fill="#fff" opacity="0.020"/><rect x="29" y="26" width="5" height="1" fill="#fff" opacity="0.031"/><rect x="27" y="30" width="1" height="6" fill="#fff" opacity="0.021"/><rect x="16" y="8" width="7" height="1" fill="#000" opacity="0.021"/><rect x="14" y="0" width="7" height="1" fill="#fff" opacity="0.039"/><rect x="31" y="6" width="1" height="5" fill="#000" opacity="0.026"/><rect x="16" y="45" width="3" height="1" fill="#000" opacity="0.064"/><rect x="40" y="26" width="1" height="6" fill="#000" opacity="0.047"/><rect x="34" y="40" width="1" height="3" fill="#000" opacity="0.063"/><rect x="8" y="14" width="7" height="1" fill="#000" opacity="0.037"/><rect x="38" y="20" width="1" height="3" fill="#fff" opacity="0.049"/><rect x="8" y="15" width="3" height="1" fill="#000" opacity="0.033"/><rect x="26" y="34" width="1" height="7" fill="#fff" opacity="0.028"/><rect x="1" y="6" width="1" height="3" fill="#000" opacity="0.038"/><rect x="23" y="7" width="1" height="7" fill="#000" opacity="0.058"/><rect x="43" y="12" width="1" height="2" fill="#fff" opacity="0.015"/><rect x="39" y="32" width="6" height="1" fill="#fff" opacity="0.021"/><rect x="11" y="10" width="4" height="1" fill="#000" opacity="0.025"/><rect x="43" y="29" width="2" height="1" fill="#000" opacity="0.036"/><rect x="32" y="22" width="1" height="5" fill="#fff" opacity="0.027"/><rect x="2" y="12" width="3" height="1" fill="#fff" opacity="0.027"/><rect x="12" y="38" width="3" height="1" fill="#fff" opacity="0.042"/><rect x="5" y="45" width="7" height="1" fill="#000" opacity="0.048"/><rect x="37" y="21" width="1" height="4" fill="#fff" opacity="0.018"/><rect x="10" y="25" width="1" height="3" fill="#000" opacity="0.064"/><rect x="27" y="11" width="1" height="5" fill="#fff" opacity="0.020"/><rect x="19" y="30" width="1" height="2" fill="#fff" opacity="0.026"/><rect x="39" y="3" width="3" height="1" fill="#fff" opacity="0.048"/><rect x="13" y="42" width="5" height="1" fill="#000" opacity="0.047"/><rect x="31" y="41" width="1" height="3" fill="#000" opacity="0.058"/><rect x="1" y="7" width="6" height="1" fill="#fff" opacity="0.022"/><rect x="32" y="3" width="3" height="1" fill="#000" opacity="0.021"/><rect x="17" y="21" width="1" height="6" fill="#000" opacity="0.041"/><rect x="6" y="40" width="1" height="5" fill="#000" opacity="0.024"/><rect x="2" y="24" width="1" height="3" fill="#fff" opacity="0.048"/><rect x="34" y="39" width="6" height="1" fill="#fff" opacity="0.047"/><rect x="33" y="25" width="6" height="1" fill="#fff" opacity="0.033"/><rect x="17" y="35" width="4" height="1" fill="#000" opacity="0.057"/><rect x="15" y="37" width="1" height="2" fill="#000" opacity="0.040"/><rect x="3" y="20" width="1" height="7" fill="#fff" opacity="0.034"/><rect x="20" y="4" width="1" height="3" fill="#fff" opacity="0.031"/><rect x="15" y="2" width="1" height="6" fill="#fff" opacity="0.042"/><rect x="9" y="15" width="6" height="1" fill="#000" opacity="0.023"/><rect x="7" y="13" width="2" height="1" fill="#fff" opacity="0.019"/><rect x="8" y="42" width="1" height="5" fill="#fff" opacity="0.023"/><rect x="26" y="23" width="1" height="7" fill="#000" opacity="0.070"/><rect x="46" y="8" width="3" height="1" fill="#fff" opacity="0.032"/><rect x="32" y="39" width="1" height="4" fill="#fff" opacity="0.035"/><rect x="44" y="37" width="3" height="1" fill="#000" opacity="0.058"/><rect x="15" y="32" width="7" height="1" fill="#000" opacity="0.064"/><rect x="3" y="0" width="4" height="1" fill="#fff" opacity="0.015"/><rect x="14" y="34" width="1" height="4" fill="#fff" opacity="0.017"/><rect x="35" y="15" width="7" height="1" fill="#000" opacity="0.044"/><rect x="21" y="21" width="5" height="1" fill="#000" opacity="0.062"/><rect x="7" y="28" width="6" height="1" fill="#000" opacity="0.058"/><rect x="47" y="16" width="1" height="5" fill="#000" opacity="0.038"/><rect x="38" y="20" width="1" height="4" fill="#000" opacity="0.057"/><rect x="27" y="41" width="4" height="1" fill="#000" opacity="0.043"/><rect x="34" y="5" width="1" height="5" fill="#000" opacity="0.044"/><rect x="19" y="0" width="1" height="2" fill="#fff" opacity="0.046"/><rect x="44" y="19" width="5" height="1" fill="#000" opacity="0.055"/><rect x="9" y="14" width="1" height="4" fill="#000" opacity="0.036"/><rect x="20" y="45" width="1" height="5" fill="#000" opacity="0.066"/><rect x="17" y="28" width="6" height="1" fill="#000" opacity="0.035"/><rect x="25" y="46" width="6" height="1" fill="#fff" opacity="0.027"/><rect x="23" y="43" width="1" height="5" fill="#000" opacity="0.060"/><rect x="23" y="24" width="6" height="1" fill="#fff" opacity="0.035"/><rect x="5" y="29" width="4" height="1" fill="#000" opacity="0.031"/><rect x="10" y="36" width="1" height="4" fill="#000" opacity="0.053"/><rect x="4" y="37" width="6" height="1" fill="#fff" opacity="0.033"/><rect x="17" y="47" width="1" height="2" fill="#000" opacity="0.024"/><rect x="9" y="6" width="1" height="7" fill="#000" opacity="0.041"/><rect x="31" y="33" width="4" height="1" fill="#000" opacity="0.040"/><rect x="21" y="43" width="1" height="3" fill="#fff" opacity="0.033"/><rect x="45" y="39" width="1" height="2" fill="#fff" opacity="0.043"/><rect x="0" y="24" width="1" height="2" fill="#000" opacity="0.068"/><rect x="33" y="23" width="1" height="7" fill="#fff" opacity="0.018"/><rect x="9" y="15" width="1" height="7" fill="#fff" opacity="0.036"/><rect x="20" y="13" width="1" height="5" fill="#fff" opacity="0.024"/><rect x="3" y="30" width="4" height="1" fill="#000" opacity="0.035"/><rect x="11" y="3" width="1" height="5" fill="#fff" opacity="0.031"/><rect x="20" y="6" width="3" height="1" fill="#fff" opacity="0.022"/><rect x="45" y="30" width="1" height="6" fill="#000" opacity="0.042"/><rect x="25" y="11" width="1" height="4" fill="#000" opacity="0.067"/><rect x="16" y="31" width="1" height="5" fill="#000" opacity="0.037"/><rect x="5" y="30" width="3" height="1" fill="#fff" opacity="0.022"/><rect x="24" y="33" width="6" height="1" fill="#000" opacity="0.059"/><rect x="15" y="0" width="5" height="1" fill="#000" opacity="0.043"/><rect x="26" y="38" width="3" height="1" fill="#fff" opacity="0.041"/><rect x="33" y="8" width="1" height="7" fill="#000" opacity="0.051"/><rect x="3" y="9" width="1" height="6" fill="#000" opacity="0.020"/><rect x="9" y="8" width="1" height="2" fill="#fff" opacity="0.036"/><rect x="30" y="44" width="1" height="5" fill="#fff" opacity="0.040"/><rect x="32" y="19" width="1" height="2" fill="#000" opacity="0.041"/><rect x="5" y="28" width="3" height="1" fill="#fff" opacity="0.028"/><rect x="19" y="20" width="1" height="4" fill="#fff" opacity="0.033"/><rect x="42" y="45" width="2" height="1" fill="#fff" opacity="0.038"/><rect x="25" y="43" width="5" height="1" fill="#000" opacity="0.059"/><rect x="28" y="0" width="5" height="1" fill="#000" opacity="0.044"/><rect x="7" y="29" width="1" height="2" fill="#000" opacity="0.062"/><rect x="39" y="9" width="1" height="4" fill="#000" opacity="0.067"/><rect x="21" y="25" width="6" height="1" fill="#000" opacity="0.033"/><rect x="46" y="7" width="4" height="1" fill="#fff" opacity="0.024"/><rect x="40" y="21" width="5" height="1" fill="#000" opacity="0.025"/><rect x="6" y="8" width="7" height="1" fill="#000" opacity="0.029"/><rect x="2" y="29" width="6" height="1" fill="#000" opacity="0.025"/><rect x="7" y="27" width="1" height="5" fill="#000" opacity="0.037"/><rect x="32" y="8" width="1" height="7" fill="#fff" opacity="0.019"/><rect x="30" y="21" width="1" height="5" fill="#000" opacity="0.056"/><rect x="20" y="15" width="7" height="1" fill="#000" opacity="0.046"/><rect x="12" y="21" width="4" height="1" fill="#000" opacity="0.025"/><rect x="32" y="21" width="4" height="1" fill="#000" opacity="0.051"/><rect x="34" y="19" width="1" height="6" fill="#fff" opacity="0.035"/><rect x="36" y="45" width="1" height="3" fill="#000" opacity="0.046"/><rect x="12" y="36" width="2" height="1" fill="#000" opacity="0.030"/><rect x="15" y="30" width="6" height="1" fill="#fff" opacity="0.026"/><rect x="23" y="17" width="1" height="5" fill="#000" opacity="0.043"/><rect x="15" y="36" width="1" height="6" fill="#000" opacity="0.023"/><rect x="10" y="47" width="1" height="4" fill="#000" opacity="0.026"/><rect x="18" y="43" width="1" height="4" fill="#fff" opacity="0.034"/><rect x="11" y="38" width="6" height="1" fill="#000" opacity="0.043"/><rect x="42" y="8" width="1" height="4" fill="#000" opacity="0.062"/><rect x="39" y="37" width="7" height="1" fill="#000" opacity="0.021"/><rect x="29" y="2" width="3" height="1" fill="#000" opacity="0.026"/><rect x="21" y="33" width="3" height="1" fill="#fff" opacity="0.034"/><rect x="41" y="2" width="1" height="7" fill="#000" opacity="0.027"/><rect x="38" y="6" width="1" height="5" fill="#fff" opacity="0.045"/><rect x="36" y="26" width="1" height="4" fill="#fff" opacity="0.049"/><rect x="44" y="26" width="1" height="5" fill="#fff" opacity="0.018"/><rect x="21" y="33" width="6" height="1" fill="#fff" opacity="0.046"/><rect x="3" y="18" width="7" height="1" fill="#000" opacity="0.042"/><rect x="20" y="19" width="1" height="6" fill="#000" opacity="0.032"/><rect x="15" y="32" width="5" height="1" fill="#000" opacity="0.044"/><rect x="15" y="34" width="1" height="4" fill="#000" opacity="0.067"/><rect x="46" y="42" width="1" height="4" fill="#000" opacity="0.041"/><rect x="14" y="41" width="7" height="1" fill="#fff" opacity="0.018"/><rect x="33" y="8" width="2" height="1" fill="#000" opacity="0.049"/><rect x="18" y="15" width="7" height="1" fill="#fff" opacity="0.025"/><rect x="28" y="33" width="5" height="1" fill="#fff" opacity="0.038"/><rect x="19" y="1" width="5" height="1" fill="#000" opacity="0.035"/><rect x="30" y="13" width="1" height="3" fill="#fff" opacity="0.046"/><rect x="12" y="20" width="1" height="4" fill="#000" opacity="0.021"/><rect x="44" y="35" width="1" height="3" fill="#000" opacity="0.032"/><rect x="3" y="41" width="1" height="2" fill="#fff" opacity="0.043"/><rect x="17" y="26" width="1" height="7" fill="#000" opacity="0.037"/><rect x="28" y="26" width="2" height="1" fill="#fff" opacity="0.044"/><rect x="44" y="12" width="1" height="4" fill="#fff" opacity="0.022"/><rect x="17" y="23" width="1" height="7" fill="#000" opacity="0.026"/><rect x="19" y="11" width="1" height="7" fill="#fff" opacity="0.019"/><rect x="29" y="4" width="1" height="5" fill="#000" opacity="0.024"/><rect x="0" y="38" width="1" height="6" fill="#fff" opacity="0.023"/><rect x="5" y="10" width="4" height="1" fill="#000" opacity="0.029"/><rect x="46" y="35" width="1" height="2" fill="#fff" opacity="0.045"/><rect x="2" y="39" width="5" height="1" fill="#000" opacity="0.049"/><rect x="31" y="3" width="1" height="3" fill="#fff" opacity="0.041"/><rect x="20" y="42" width="1" height="5" fill="#000" opacity="0.046"/><rect x="40" y="43" width="1" height="6" fill="#000" opacity="0.047"/><rect x="10" y="7" width="1" height="6" fill="#fff" opacity="0.037"/><rect x="16" y="45" width="7" height="1" fill="#fff" opacity="0.031"/><rect x="37" y="38" width="1" height="5" fill="#fff" opacity="0.021"/><rect x="3" y="36" width="5" height="1" fill="#000" opacity="0.029"/><rect x="1" y="38" width="1" height="5" fill="#000" opacity="0.045"/><rect x="1" y="4" width="1" height="2" fill="#000" opacity="0.048"/><rect x="46" y="15" width="6" height="1" fill="#fff" opacity="0.025"/><rect x="20" y="39" width="1" height="7" fill="#000" opacity="0.033"/><rect x="5" y="41" width="6" height="1" fill="#fff" opacity="0.023"/><rect x="44" y="42" width="6" height="1" fill="#000" opacity="0.023"/><rect x="23" y="44" width="3" height="1" fill="#000" opacity="0.068"/><rect x="38" y="8" width="1" height="3" fill="#000" opacity="0.046"/><rect x="0" y="15" width="5" height="1" fill="#000" opacity="0.027"/><rect x="19" y="30" width="1" height="5" fill="#000" opacity="0.069"/><rect x="45" y="46" width="1" height="6" fill="#fff" opacity="0.023"/><rect x="15" y="26" width="5" height="1" fill="#fff" opacity="0.022"/><rect x="39" y="13" width="1" height="2" fill="#fff" opacity="0.034"/><rect x="47" y="21" width="1" height="6" fill="#000" opacity="0.063"/><rect x="11" y="29" width="5" height="1" fill="#000" opacity="0.031"/><rect x="3" y="13" width="1" height="5" fill="#fff" opacity="0.020"/><rect x="10" y="30" width="1" height="3" fill="#fff" opacity="0.035"/><rect x="30" y="28" width="1" height="5" fill="#000" opacity="0.054"/><rect x="13" y="34" width="5" height="1" fill="#fff" opacity="0.016"/><rect x="17" y="39" width="1" height="2" fill="#000" opacity="0.057"/><rect x="36" y="41" width="7" height="1" fill="#fff" opacity="0.018"/><rect x="46" y="23" width="1" height="3" fill="#000" opacity="0.056"/><rect x="1" y="20" width="5" height="1" fill="#fff" opacity="0.044"/><rect x="16" y="33" width="7" height="1" fill="#fff" opacity="0.028"/><rect x="2" y="12" width="3" height="1" fill="#000" opacity="0.026"/><rect x="26" y="27" width="1" height="5" fill="#000" opacity="0.027"/><rect x="16" y="20" width="1" height="7" fill="#fff" opacity="0.027"/><rect x="17" y="34" width="1" height="7" fill="#fff" opacity="0.019"/><rect x="22" y="14" width="2" height="1" fill="#fff" opacity="0.026"/><rect x="2" y="1" width="1" height="7" fill="#000" opacity="0.048"/><rect x="47" y="19" width="7" height="1" fill="#000" opacity="0.066"/><rect x="44" y="22" width="7" height="1" fill="#fff" opacity="0.041"/><rect x="40" y="16" width="2" height="1" fill="#000" opacity="0.026"/><rect x="31" y="24" width="4" height="1" fill="#fff" opacity="0.039"/><rect x="25" y="12" width="1" height="5" fill="#000" opacity="0.038"/><rect x="33" y="5" width="7" height="1" fill="#fff" opacity="0.029"/><rect x="37" y="16" width="1" height="7" fill="#000" opacity="0.035"/><rect x="25" y="7" width="4" height="1" fill="#000" opacity="0.066"/><rect x="24" y="31" width="1" height="6" fill="#fff" opacity="0.039"/><rect x="4" y="1" width="1" height="2" fill="#fff" opacity="0.045"/><rect x="16" y="42" width="3" height="1" fill="#000" opacity="0.039"/><rect x="23" y="1" width="6" height="1" fill="#000" opacity="0.031"/><rect x="3" y="39" width="6" height="1" fill="#fff" opacity="0.029"/><rect x="29" y="28" width="1" height="5" fill="#000" opacity="0.039"/><rect x="43" y="32" width="1" height="4" fill="#fff" opacity="0.027"/><rect x="9" y="38" width="3" height="1" fill="#fff" opacity="0.023"/><rect x="33" y="0" width="1" height="6" fill="#000" opacity="0.020"/><rect x="41" y="35" width="1" height="2" fill="#000" opacity="0.048"/><rect x="21" y="16" width="1" height="4" fill="#fff" opacity="0.015"/><rect x="13" y="44" width="1" height="5" fill="#000" opacity="0.068"/><rect x="10" y="21" width="6" height="1" fill="#000" opacity="0.060"/><rect x="26" y="18" width="4" height="1" fill="#000" opacity="0.047"/><rect x="15" y="23" width="1" height="4" fill="#000" opacity="0.066"/><rect x="4" y="4" width="1" height="2" fill="#000" opacity="0.036"/><rect x="32" y="43" width="5" height="1" fill="#fff" opacity="0.036"/><rect x="30" y="3" width="1" height="4" fill="#fff" opacity="0.032"/><rect x="25" y="16" width="1" height="7" fill="#000" opacity="0.038"/><rect x="11" y="21" width="1" height="3" fill="#000" opacity="0.061"/><rect x="26" y="41" width="7" height="1" fill="#fff" opacity="0.040"/><rect x="10" y="8" width="3" height="1" fill="#fff" opacity="0.037"/><rect x="11" y="0" width="1" height="5" fill="#000" opacity="0.067"/><rect x="8" y="17" width="1" height="7" fill="#fff" opacity="0.023"/><rect x="24" y="43" width="3" height="1" fill="#fff" opacity="0.039"/><rect x="2" y="12" width="1" height="4" fill="#fff" opacity="0.033"/><rect x="25" y="21" width="2" height="1" fill="#000" opacity="0.063"/><rect x="4" y="19" width="5" height="1" fill="#000" opacity="0.062"/><rect x="25" y="46" width="1" height="6" fill="#fff" opacity="0.019"/><rect x="43" y="44" width="3" height="1" fill="#000" opacity="0.060"/><rect x="11" y="6" width="6" height="1" fill="#000" opacity="0.033"/><rect x="7" y="9" width="1" height="4" fill="#000" opacity="0.034"/><rect x="17" y="40" width="5" height="1" fill="#fff" opacity="0.022"/><rect x="23" y="35" width="4" height="1" fill="#000" opacity="0.028"/><rect x="19" y="42" width="2" height="1" fill="#fff" opacity="0.026"/><rect x="12" y="26" width="1" height="5" fill="#fff" opacity="0.026"/><rect x="35" y="3" width="1" height="3" fill="#000" opacity="0.053"/><rect x="17" y="12" width="4" height="1" fill="#000" opacity="0.070"/><rect x="46" y="3" width="1" height="3" fill="#000" opacity="0.067"/><rect x="43" y="4" width="4" height="1" fill="#fff" opacity="0.040"/><rect x="32" y="29" width="2" height="1" fill="#000" opacity="0.023"/><rect x="33" y="16" width="3" height="1" fill="#000" opacity="0.057"/><rect x="34" y="42" width="1" height="2" fill="#000" opacity="0.044"/><rect x="26" y="16" width="6" height="1" fill="#fff" opacity="0.034"/><rect x="24" y="46" width="1" height="4" fill="#000" opacity="0.034"/><rect x="40" y="40" width="1" height="5" fill="#fff" opacity="0.024"/><rect x="20" y="38" width="2" height="1" fill="#fff" opacity="0.021"/><rect x="3" y="47" width="3" height="1" fill="#000" opacity="0.054"/><rect x="6" y="9" width="3" height="1" fill="#fff" opacity="0.020"/><rect x="25" y="32" width="1" height="2" fill="#fff" opacity="0.025"/><rect x="13" y="1" width="3" height="1" fill="#fff" opacity="0.040"/><rect x="20" y="27" width="5" height="1" fill="#000" opacity="0.031"/><rect x="45" y="11" width="1" height="4" fill="#fff" opacity="0.028"/><rect x="11" y="22" width="1" height="6" fill="#000" opacity="0.027"/><rect x="24" y="41" width="1" height="2" fill="#fff" opacity="0.036"/><rect x="45" y="40" width="5" height="1" fill="#000" opacity="0.048"/><rect x="47" y="44" width="7" height="1" fill="#fff" opacity="0.037"/><rect x="24" y="32" width="3" height="1" fill="#fff" opacity="0.033"/><rect x="2" y="33" width="7" height="1" fill="#fff" opacity="0.024"/><rect x="3" y="20" width="3" height="1" fill="#000" opacity="0.036"/><rect x="39" y="20" width="3" height="1" fill="#000" opacity="0.069"/><rect x="8" y="31" width="1" height="2" fill="#fff" opacity="0.043"/><rect x="9" y="7" width="2" height="1" fill="#000" opacity="0.070"/><rect x="2" y="45" width="4" height="1" fill="#fff" opacity="0.042"/><rect x="34" y="0" width="1" height="5" fill="#fff" opacity="0.024"/><rect x="4" y="6" width="1" height="6" fill="#fff" opacity="0.040"/><rect x="4" y="31" width="1" height="2" fill="#000" opacity="0.047"/><rect x="9" y="23" width="3" height="1" fill="#fff" opacity="0.015"/><rect x="14" y="18" width="2" height="1" fill="#fff" opacity="0.036"/><rect x="43" y="39" width="1" height="5" fill="#000" opacity="0.024"/><rect x="13" y="34" width="1" height="7" fill="#fff" opacity="0.047"/><rect x="35" y="42" width="1" height="5" fill="#fff" opacity="0.043"/><rect x="40" y="17" width="7" height="1" fill="#000" opacity="0.055"/><rect x="8" y="10" width="7" height="1" fill="#000" opacity="0.022"/><rect x="16" y="22" width="6" height="1" fill="#000" opacity="0.035"/><rect x="4" y="44" width="3" height="1" fill="#000" opacity="0.038"/><rect x="26" y="12" width="3" height="1" fill="#fff" opacity="0.023"/><rect x="39" y="26" width="1" height="4" fill="#fff" opacity="0.032"/><rect x="22" y="32" width="7" height="1" fill="#fff" opacity="0.031"/><rect x="7" y="18" width="1" height="2" fill="#000" opacity="0.043"/><rect x="24" y="12" width="1" height="7" fill="#fff" opacity="0.022"/><rect x="23" y="26" width="1" height="4" fill="#fff" opacity="0.029"/><rect x="18" y="42" width="7" height="1" fill="#fff" opacity="0.035"/><rect x="23" y="8" width="6" height="1" fill="#000" opacity="0.033"/><rect x="21" y="6" width="6" height="1" fill="#fff" opacity="0.037"/><rect x="13" y="5" width="1" height="4" fill="#fff" opacity="0.015"/><rect x="44" y="22" width="2" height="1" fill="#000" opacity="0.028"/><rect x="10" y="29" width="1" height="6" fill="#fff" opacity="0.037"/><rect x="14" y="1" width="1" height="5" fill="#fff" opacity="0.022"/><rect x="7" y="3" width="1" height="2" fill="#000" opacity="0.053"/><rect x="13" y="33" width="6" height="1" fill="#fff" opacity="0.027"/><rect x="25" y="6" width="1" height="7" fill="#000" opacity="0.020"/><rect x="44" y="39" width="1" height="7" fill="#000" opacity="0.053"/><rect x="30" y="7" width="1" height="5" fill="#fff" opacity="0.015"/><rect x="1" y="6" width="1" height="4" fill="#fff" opacity="0.034"/><rect x="6" y="19" width="6" height="1" fill="#000" opacity="0.023"/><rect x="42" y="5" width="1" height="6" fill="#000" opacity="0.035"/><rect x="15" y="37" width="1" height="5" fill="#fff" opacity="0.049"/><rect x="10" y="35" width="2" height="1" fill="#fff" opacity="0.044"/><rect x="32" y="9" width="3" height="1" fill="#000" opacity="0.046"/><rect x="39" y="45" width="2" height="1" fill="#fff" opacity="0.014"/><rect x="7" y="47" width="1" height="7" fill="#000" opacity="0.028"/><rect x="1" y="25" width="1" height="2" fill="#fff" opacity="0.046"/><rect x="2" y="24" width="1" height="5" fill="#fff" opacity="0.022"/><rect x="42" y="26" width="1" height="4" fill="#000" opacity="0.030"/><rect x="35" y="8" width="6" height="1" fill="#000" opacity="0.066"/><rect x="40" y="19" width="4" height="1" fill="#000" opacity="0.033"/><rect x="27" y="30" width="5" height="1" fill="#fff" opacity="0.029"/><rect x="3" y="19" width="1" height="6" fill="#fff" opacity="0.032"/><rect x="25" y="14" width="7" height="1" fill="#fff" opacity="0.027"/><rect x="30" y="14" width="6" height="1" fill="#000" opacity="0.044"/><rect x="26" y="37" width="1" height="2" fill="#fff" opacity="0.035"/><rect x="23" y="38" width="1" height="7" fill="#fff" opacity="0.025"/><rect x="37" y="3" width="1" height="4" fill="#fff" opacity="0.018"/><rect x="22" y="3" width="1" height="2" fill="#fff" opacity="0.035"/><rect x="27" y="41" width="1" height="4" fill="#fff" opacity="0.024"/><rect x="5" y="25" width="3" height="1" fill="#000" opacity="0.036"/><rect x="9" y="18" width="7" height="1" fill="#fff" opacity="0.049"/><rect x="25" y="39" width="1" height="2" fill="#000" opacity="0.066"/><rect x="1" y="39" width="7" height="1" fill="#000" opacity="0.049"/><rect x="47" y="30" width="1" height="5" fill="#fff" opacity="0.036"/><rect x="4" y="11" width="2" height="1" fill="#fff" opacity="0.040"/><rect x="28" y="43" width="1" height="5" fill="#000" opacity="0.042"/><rect x="46" y="4" width="1" height="2" fill="#000" opacity="0.038"/><rect x="45" y="7" width="1" height="7" fill="#fff" opacity="0.025"/><rect x="35" y="7" width="3" height="1" fill="#fff" opacity="0.025"/><rect x="7" y="9" width="4" height="1" fill="#fff" opacity="0.015"/><rect x="24" y="12" width="7" height="1" fill="#000" opacity="0.045"/><rect x="24" y="32" width="5" height="1" fill="#fff" opacity="0.040"/><rect x="37" y="20" width="1" height="3" fill="#fff" opacity="0.043"/><rect x="24" y="37" width="1" height="6" fill="#000" opacity="0.043"/><rect x="29" y="22" width="6" height="1" fill="#fff" opacity="0.039"/><rect x="5" y="44" width="1" height="5" fill="#fff" opacity="0.023"/><rect x="36" y="2" width="4" height="1" fill="#000" opacity="0.060"/><rect x="15" y="45" width="1" height="3" fill="#fff" opacity="0.036"/><rect x="26" y="33" width="5" height="1" fill="#fff" opacity="0.018"/><rect x="39" y="6" width="7" height="1" fill="#fff" opacity="0.044"/><rect x="44" y="22" width="6" height="1" fill="#fff" opacity="0.031"/><rect x="28" y="22" width="4" height="1" fill="#fff" opacity="0.041"/><rect x="12" y="34" width="1" height="7" fill="#000" opacity="0.026"/><rect x="37" y="10" width="1" height="4" fill="#000" opacity="0.038"/><rect x="45" y="18" width="6" height="1" fill="#000" opacity="0.056"/><rect x="15" y="22" width="1" height="2" fill="#fff" opacity="0.045"/><rect x="18" y="16" width="6" height="1" fill="#fff" opacity="0.031"/><rect x="18" y="17" width="1" height="6" fill="#fff" opacity="0.028"/><rect x="34" y="8" width="6" height="1" fill="#fff" opacity="0.042"/><rect x="42" y="44" width="6" height="1" fill="#000" opacity="0.033"/><rect x="23" y="41" width="6" height="1" fill="#fff" opacity="0.030"/><rect x="46" y="13" width="7" height="1" fill="#000" opacity="0.048"/><rect x="14" y="4" width="1" height="6" fill="#fff" opacity="0.047"/><rect x="4" y="19" width="2" height="1" fill="#fff" opacity="0.034"/><rect x="23" y="19" width="1" height="4" fill="#000" opacity="0.023"/><rect x="4" y="9" width="1" height="2" fill="#fff" opacity="0.019"/><rect x="33" y="34" width="2" height="1" fill="#fff" opacity="0.038"/><rect x="44" y="22" width="1" height="6" fill="#fff" opacity="0.021"/><rect x="26" y="8" width="5" height="1" fill="#fff" opacity="0.038"/><rect x="35" y="5" width="3" height="1" fill="#000" opacity="0.033"/><rect x="17" y="9" width="1" height="6" fill="#000" opacity="0.066"/><rect x="1" y="38" width="1" height="5" fill="#000" opacity="0.070"/><rect x="39" y="20" width="1" height="3" fill="#fff" opacity="0.032"/><rect x="2" y="6" width="1" height="2" fill="#fff" opacity="0.025"/><rect x="26" y="2" width="1" height="3" fill="#000" opacity="0.054"/><rect x="37" y="42" width="1" height="2" fill="#fff" opacity="0.016"/><rect x="25" y="14" width="5" height="1" fill="#fff" opacity="0.022"/><rect x="15" y="16" width="2" height="1" fill="#000" opacity="0.046"/><rect x="43" y="22" width="5" height="1" fill="#000" opacity="0.067"/><rect x="12" y="9" width="1" height="3" fill="#fff" opacity="0.031"/><rect x="21" y="11" width="1" height="3" fill="#000" opacity="0.051"/><rect x="36" y="16" width="6" height="1" fill="#000" opacity="0.029"/><rect x="19" y="32" width="4" height="1" fill="#000" opacity="0.030"/><rect x="15" y="34" width="2" height="1" fill="#fff" opacity="0.041"/><rect x="13" y="2" width="1" height="5" fill="#000" opacity="0.027"/><rect x="4" y="4" width="1" height="5" fill="#000" opacity="0.041"/><rect x="14" y="21" width="1" height="3" fill="#fff" opacity="0.024"/><rect x="47" y="4" width="5" height="1" fill="#000" opacity="0.066"/><rect x="2" y="24" width="2" height="1" fill="#fff" opacity="0.020"/><rect x="10" y="31" width="1" height="3" fill="#000" opacity="0.037"/><rect x="9" y="45" width="4" height="1" fill="#000" opacity="0.030"/><rect x="43" y="15" width="7" height="1" fill="#000" opacity="0.053"/><rect x="46" y="7" width="1" height="4" fill="#fff" opacity="0.044"/><rect x="46" y="22" width="7" height="1" fill="#fff" opacity="0.025"/><rect x="7" y="17" width="6" height="1" fill="#000" opacity="0.061"/><rect x="33" y="16" width="2" height="1" fill="#fff" opacity="0.022"/><rect x="19" y="43" width="1" height="6" fill="#fff" opacity="0.048"/><rect x="6" y="18" width="5" height="1" fill="#000" opacity="0.069"/><rect x="38" y="31" width="5" height="1" fill="#fff" opacity="0.019"/><rect x="43" y="1" width="5" height="1" fill="#000" opacity="0.040"/><rect x="10" y="2" width="1" height="3" fill="#fff" opacity="0.043"/><rect x="1" y="14" width="1" height="5" fill="#000" opacity="0.045"/></pattern><linearGradient id="hdr" x1="0" y1="0" x2="0" y2="1"><stop offset="0" stop-color="#464646"/><stop offset="1" stop-color="#1c1c1c"/></linearGradient><clipPath id="clipL3"><rect x="0" y="0" width="463.5" height="1397"/></clipPath></defs><polygon points="357.0,507.4 561.5,526.6 561.5,965.0 357.0,984.0" fill="#29343f" stroke="#5b9ad6" stroke-width="1.2" /><polygon points="391.2,525.2 600.0,542.5 600.0,969.0 391.2,986.5" fill="url(#linen)" stroke="none" stroke-width="1" /><g clip-path="url(#clipL3)"><rect x="441.5" y="545.8" width="40" height="35.7" rx="6" fill="#fff" stroke="#bbb" stroke-width="0.6"/><rect x="441.5" y="929.7" width="40" height="36.3" rx="6" fill="#fff" stroke="#bbb" stroke-width="0.6"/><rect x="461.5" y="561" width="2" height="1.3" fill="#3050a0"/><path d="M461.5 944Q464 945 462 948Q464 950 461.5 952" fill="none" stroke="#3050a0" stroke-width="1.2"/></g><polygon points="463.5,521.2 664.5,538.4 664.5,971.6 463.5,991.2" fill="#111111" stroke="none" stroke-width="1" /><polygon points="463.5,531.2 664.5,547.8 664.5,964.0 463.5,979.8" fill="url(#linend)" stroke="none" stroke-width="1" /><polygon points="463.5,521.2 664.5,538.4 664.5,971.6 463.5,991.2" fill="none" stroke="#8a8a8a" stroke-width="0.8" /><rect x="510" y="738.2" width="48" height="34.6" rx="6" fill="#7d7d7d"/><rect x="514" y="771.5" width="40" height="1.3" fill="#5a5a5a"/><text x="531.5" y="760" font-family="Liberation Sans" font-size="12" fill="#1f2f60" text-anchor="middle" transform="translate(531.5,0) scale(0.85,1) translate(-531.5,0)">5</text><polygon points="500.0,518.2 700.7,536.5 700.7,974.0 500.0,993.5" fill="none" stroke="#8a8a8a" stroke-width="0.8" /><polygon points="551.6,538.9 725.0,556.0 725.0,957.0 551.6,973.6" fill="#0b0b0b" stroke="none" stroke-width="1" /><polygon points="595.0,590.0 725.0,598.0 725.0,957.0 595.0,970.0" fill="#000" stroke="none" stroke-width="1" /><polyline points="551.6,538.9 590,542.8" fill="none" stroke="#e0e0e0" stroke-width="1.1"/><polyline points="551.6,538.9 551.6,973.6 681,961.4" fill="none" stroke="#e0e0e0" stroke-width="1.1"/><rect x="575.8" y="556.5" width="41" height="35" rx="6" fill="#161616"/><rect x="576" y="920" width="41" height="35" rx="6" fill="#161616"/><text x="596" y="942" font-family="Liberation Sans" font-size="11" fill="#1a2030" text-anchor="middle">4</text><line x1="664.5" y1="538.4" x2="664.5" y2="971.6" stroke="#2a2a2a" stroke-width="0.8"/><line x1="700.7" y1="536.5" x2="700.7" y2="974.0" stroke="#3a3a3a" stroke-width="0.8"/><line x1="590.0" y1="979.5" x2="664.6" y2="971.6" stroke="#8a8a8a" stroke-width="0.8"/><line x1="664.6" y1="971.6" x2="664.6" y2="963.8" stroke="#8a8a8a" stroke-width="0.8"/><line x1="500.0" y1="993.5" x2="700.7" y2="974.0" stroke="#8a8a8a" stroke-width="0.8"/><line x1="700.7" y1="974.0" x2="700.7" y2="966.0" stroke="#8a8a8a" stroke-width="0.8"/><polygon points="602.6,599.4 641.8,601.5 641.8,950.4 602.6,954.3" fill="#000" stroke="#8a8a8a" stroke-width="0.8" /><polygon points="641.5,598.6 681.3,600.9 681.3,952.8 641.5,956.7" fill="#fff" stroke="none" stroke-width="1" /><polygon points="681.3,597.2 722.4,599.4 722.4,967.9 681.3,971.6" fill="#fff" stroke="#8a8a8a" stroke-width="0.8" /><line x1="681.3" y1="644.0" x2="722.4" y2="647.0" stroke="#8a8a8a" stroke-width="0.9"/><line x1="681.3" y1="690.8" x2="722.4" y2="693.0" stroke="#8a8a8a" stroke-width="0.9"/><line x1="681.3" y1="737.6" x2="722.4" y2="739.1" stroke="#8a8a8a" stroke-width="0.9"/><line x1="681.3" y1="784.4" x2="722.4" y2="785.1" stroke="#8a8a8a" stroke-width="0.9"/><line x1="681.3" y1="831.2" x2="722.4" y2="831.2" stroke="#8a8a8a" stroke-width="0.9"/><line x1="681.3" y1="878.0" x2="722.4" y2="877.3" stroke="#8a8a8a" stroke-width="0.9"/><line x1="681.3" y1="924.8" x2="722.4" y2="923.3" stroke="#8a8a8a" stroke-width="0.9"/><polygon points="722.5,594.9 770.5,598.3 770.5,968.5 722.5,974.0" fill="#1a1a1a" stroke="#8a8a8a" stroke-width="0.8" /><polygon points="722.5,594.9 770.5,598.3 770.5,963.3 722.5,967.4" fill="#fff" stroke="#8a8a8a" stroke-width="0.8" /><line x1="722.5" y1="639.5" x2="770.5" y2="643.9" stroke="#6a6a6a" stroke-width="1.4"/><line x1="722.5" y1="642.0" x2="770.5" y2="646.9" stroke="#9a9a9a" stroke-width="0.8"/><line x1="722.5" y1="686.0" x2="770.5" y2="689.5" stroke="#6a6a6a" stroke-width="1.4"/><line x1="722.5" y1="688.5" x2="770.5" y2="692.5" stroke="#9a9a9a" stroke-width="0.8"/><line x1="722.5" y1="732.6" x2="770.5" y2="735.2" stroke="#6a6a6a" stroke-width="1.4"/><line x1="722.5" y1="735.1" x2="770.5" y2="738.2" stroke="#9a9a9a" stroke-width="0.8"/><line x1="722.5" y1="779.1" x2="770.5" y2="780.8" stroke="#6a6a6a" stroke-width="1.4"/><line x1="722.5" y1="781.6" x2="770.5" y2="783.8" stroke="#9a9a9a" stroke-width="0.8"/><line x1="722.5" y1="825.7" x2="770.5" y2="826.4" stroke="#6a6a6a" stroke-width="1.4"/><line x1="722.5" y1="828.2" x2="770.5" y2="829.4" stroke="#9a9a9a" stroke-width="0.8"/><line x1="722.5" y1="872.3" x2="770.5" y2="872.0" stroke="#6a6a6a" stroke-width="1.4"/><line x1="722.5" y1="874.8" x2="770.5" y2="875.0" stroke="#9a9a9a" stroke-width="0.8"/><line x1="722.5" y1="918.8" x2="770.5" y2="917.7" stroke="#6a6a6a" stroke-width="1.4"/><line x1="722.5" y1="921.3" x2="770.5" y2="920.7" stroke="#9a9a9a" stroke-width="0.8"/><polygon points="770.5,594.7 902.5,603.3 902.5,961.3 770.5,974.5" fill="#fff" stroke="#8a8a8a" stroke-width="0.8" /><line x1="770.5" y1="642.2" x2="902.5" y2="648.0" stroke="#5a5a5a" stroke-width="1.5"/><line x1="770.5" y1="689.7" x2="902.5" y2="692.8" stroke="#5a5a5a" stroke-width="1.5"/><line x1="770.5" y1="737.1" x2="902.5" y2="737.5" stroke="#5a5a5a" stroke-width="1.5"/><line x1="770.5" y1="784.6" x2="902.5" y2="782.3" stroke="#5a5a5a" stroke-width="1.5"/><line x1="770.5" y1="832.1" x2="902.5" y2="827.0" stroke="#5a5a5a" stroke-width="1.5"/><line x1="770.5" y1="879.5" x2="902.5" y2="871.8" stroke="#5a5a5a" stroke-width="1.5"/><line x1="770.5" y1="927.0" x2="902.5" y2="916.5" stroke="#5a5a5a" stroke-width="1.5"/><text x="0" y="0" font-family="Liberation Sans" font-weight="bold" font-size="21" fill="#000" transform="translate(770.3,626.0) scale(0.6,1)">Row 0</text><text x="0" y="0" font-family="Liberation Sans" font-weight="bold" font-size="21" fill="#000" transform="translate(770.3,673.5) scale(0.6,1)">Row 1</text><text x="0" y="0" font-family="Liberation Sans" font-weight="bold" font-size="21" fill="#000" transform="translate(770.3,721.0) scale(0.6,1)">Row 2</text><text x="0" y="0" font-family="Liberation Sans" font-weight="bold" font-size="21" fill="#000" transform="translate(770.3,768.5) scale(0.6,1)">Row 3</text><text x="0" y="0" font-family="Liberation Sans" font-weight="bold" font-size="21" fill="#000" transform="translate(770.3,815.9) scale(0.6,1)">Row 4</text><text x="0" y="0" font-family="Liberation Sans" font-weight="bold" font-size="21" fill="#000" transform="translate(770.3,863.4) scale(0.6,1)">Row 5</text><text x="0" y="0" font-family="Liberation Sans" font-weight="bold" font-size="21" fill="#000" transform="translate(770.3,910.9) scale(0.6,1)">Row 6</text><text x="0" y="0" font-family="Liberation Sans" font-weight="bold" font-size="21" fill="#000" transform="translate(770.3,958.4) scale(0.6,1)">Row 7</text><polygon points="589.4,538.1 762.6,552.6 762.6,590.1 589.4,578.1" fill="url(#hdr)" stroke="#8a8a8a" stroke-width="0.8" /><polygon points="628.4,535.3 800.8,550.2 800.8,588.7 628.4,576.3" fill="none" stroke="#7a7a7a" stroke-width="0.8" /><line x1="463.5" y1="521.2" x2="628.4" y2="535.3" stroke="#7a7a7a" stroke-width="0.8"/><path d="M718 554.5V572.5M718 555L714.8 558.5" fill="none" stroke="#f2f2f2" stroke-width="1.7"/><polygon points="653.7,506.3 683.6,509.4 683.6,556.5 653.7,554.0" fill="rgba(255,255,255,0.04)" stroke="#7a7a7a" stroke-width="0.8" /><ellipse cx="668.4" cy="531.4" rx="6.8" ry="11.2" fill="#000" stroke="#fff" stroke-width="1.4"/><path d="M665.5 526.5L671.3 536.3M671.3 526.5L665.5 536.3" stroke="#fff" stroke-width="2"/></svg><div class="a" style="left:944px;top:51px;width:330px;height:1346px;background:#262626"></div><div class="a" style="left:944px;top:51px;width:330px;height:31px;background:linear-gradient(#363636,#2c2c2c);border-bottom:1px solid #161616"></div><div class="a" style="left:1156px;top:51px;width:40px;height:30px;background:linear-gradient(#2c2c2c,#151515);box-shadow:1px 0 0 #1a1a1a,-1px 0 0 #202020"></div><div class="a" style="left:1166px;top:77px;width:20px;height:5px;background:radial-gradient(ellipse at 50% 100%,rgba(255,255,255,0.45),rgba(255,255,255,0) 65%)"></div><svg class="a" style="left:1037px;top:60px" width="14" height="15" viewBox="0 0 14 15"><path d="M1.5 1H8.5L12.5 5V14H1.5z" fill="none" stroke="#8e8e8e" stroke-width="1.6" stroke-linejoin="round"/><path d="M8.5 1V5H12.5z" fill="#8e8e8e"/></svg><svg class="a" style="left:1080px;top:60px" width="16" height="15" viewBox="0 0 16 15"><rect x="1.3" y="1.3" width="13.4" height="12.4" rx="1.2" fill="none" stroke="#8e8e8e" stroke-width="1.6"/><path d="M1.3 4.6H14.7M7.6 4.6V13.7M7.6 9H14.7" stroke="#8e8e8e" stroke-width="1.6"/></svg><svg class="a" style="left:1125px;top:59px" width="15" height="16" viewBox="0 0 15 16"><g fill="#8e8e8e"><rect x="1.2" y="1" width="2.2" height="2"/><circle cx="2.3" cy="5.2" r="1.9"/><rect x="1.2" y="8" width="2.2" height="7"/><rect x="6.4" y="1" width="2.2" height="8"/><circle cx="7.5" cy="11" r="1.9"/><rect x="6.4" y="13.6" width="2.2" height="1.4"/><rect x="11.6" y="1" width="2.2" height="2"/><circle cx="12.7" cy="5.2" r="1.9"/><rect x="11.6" y="8" width="2.2" height="7"/></g></svg><svg class="a" style="left:1168px;top:59px" width="16" height="16" viewBox="0 0 16 16"><path d="M8 1.8L14 5.6 8 9.4 2 5.6z" fill="none" stroke="#a4a4a4" stroke-width="1.7" stroke-linejoin="round"/><path d="M3.6 8.4L2 9.8 8 13.8 14 9.8 12.4 8.4" fill="none" stroke="#a4a4a4" stroke-width="1.7" stroke-linejoin="round"/></svg><div class="a" style="left:944px;top:82px;width:330px;height:30px;background:linear-gradient(#353535,#2b2b2b);border-bottom:1px solid #1a1a1a"></div><svg class="a" style="left:951px;top:92px" width="11" height="10"><path d="M0.5 1H10L5.25 9z" fill="#fff"/></svg><div class="t" style="left:967px;top:91px;font-size:13.2px;color:#e8e8e8;-webkit-text-stroke:0.2px #e8e8e8">CALayer</div><div class="t" style="right:209px;top:122px;font-size:11.7px;color:#cfcfcf;text-align:right;-webkit-text-stroke:0.2px #cfcfcf">Anchor Point</div><div class="a" style="left:1073px;top:116px;width:83px;height:22px;border-radius:3px;background:#121212"></div><div class="a" style="left:1137px;top:116px;width:19px;height:22px;border-radius:0 3px 3px 0;background:linear-gradient(#484848,#3a3a3a);box-shadow:inset 0 1px 0 rgba(255,255,255,0.06)"></div><div class="a" style="left:1137px;top:127px;width:19px;height:1px;background:#2a2a2a"></div><svg class="a" style="left:1142px;top:119px" width="9" height="16"><path d="M1 6L4.5 2 8 6z M1 10L4.5 14 8 10z" fill="#8a8a8a"/></svg><div class="t" style="left:1073px;top:120px;width:62px;text-align:center;font-size:12.3px;color:#d6d6d6">0.5</div><div class="a" style="left:1166px;top:116px;width:83px;height:22px;border-radius:3px;background:#121212"></div><div class="a" style="left:1230px;top:116px;width:19px;height:22px;border-radius:0 3px 3px 0;background:linear-gradient(#484848,#3a3a3a);box-shadow:inset 0 1px 0 rgba(255,255,255,0.06)"></div><div class="a" style="left:1230px;top:127px;width:19px;height:1px;background:#2a2a2a"></div><svg class="a" style="left:1235px;top:119px" width="9" height="16"><path d="M1 6L4.5 2 8 6z M1 10L4.5 14 8 10z" fill="#8a8a8a"/></svg><div class="t" style="left:1166px;top:120px;width:62px;text-align:center;font-size:12.3px;color:#d6d6d6">0.5</div><div class="t" style="left:1063px;top:141px;width:80px;text-align:center;font-size:11.7px;color:#cfcfcf;-webkit-text-stroke:0.2px #cfcfcf">X</div><div class="t" style="left:1157px;top:141px;width:80px;text-align:center;font-size:11.7px;color:#cfcfcf;-webkit-text-stroke:0.2px #cfcfcf">Y</div><div class="t" style="right:209px;top:166px;font-size:11.7px;color:#cfcfcf;text-align:right;-webkit-text-stroke:0.2px #cfcfcf">Anchor Point Z</div><div class="a" style="left:1072px;top:160px;width:177px;height:23px;border-radius:3px;background:#121212;box-shadow:0 1px 0 rgba(255,255,255,0.04)"></div><div class="t" style="left:1074px;top:165px;font-size:12.3px;color:#d6d6d6">0</div><div class="t" style="right:209px;top:196px;font-size:11.7px;color:#cfcfcf;text-align:right;-webkit-text-stroke:0.2px #cfcfcf">Background</div><div class="a" style="left:1073px;top:191px;width:176px;height:22px;border-radius:3px;background:linear-gradient(#4c4c4c,#3b3b3b);box-shadow:0 0 0 1px #1a1a1a,inset 0 1px 0 rgba(255,255,255,0.08)"></div><svg class="a" style="left:1082px;top:197px" width="29" height="8"><rect width="29" height="8" fill="#b8b8b8"/><rect x="0.5" y="0.5" width="28" height="7" fill="none" stroke="#333" stroke-width="1"/><path d="M1 7.5L28 0.5" stroke="#d23a3a" stroke-width="0.8"/></svg><div class="t" style="left:1116px;top:195px;font-size:13px;color:#e6e6e6">None (Nil)</div><svg class="a" style="left:1237px;top:196px" width="8" height="13"><path d="M1 5L4 1.5 7 5z M1 8L4 11.5 7 8z" fill="#9a9a9a"/></svg><div class="a" style="left:1073px;top:218px;width:102px;height:23px;border-radius:3px;background:#121212"></div><div class="t" style="left:1073px;top:223px;width:102px;text-align:center;font-size:12.8px;color:#e2e2e2"></div><div class="a" style="left:1185px;top:218px;width:64px;height:22px;border-radius:3px;background:linear-gradient(#4c4c4c,#3b3b3b);box-shadow:0 0 0 1px #1a1a1a,inset 0 1px 0 rgba(255,255,255,0.08)"></div><div class="t" style="left:1200px;top:223px;font-size:12.6px;color:#e2e2e2">Hex</div><svg class="a" style="left:1237px;top:223px" width="8" height="13"><path d="M1 5L4 1.5 7 5z M1 8L4 11.5 7 8z" fill="#9a9a9a"/></svg><div class="t" style="right:209px;top:253px;font-size:11.7px;color:#cfcfcf;text-align:right;-webkit-text-stroke:0.2px #cfcfcf">Border Color</div><div class="a" style="left:1073px;top:248px;width:176px;height:22px;border-radius:3px;background:linear-gradient(#4c4c4c,#3b3b3b);box-shadow:0 0 0 1px #1a1a1a,inset 0 1px 0 rgba(255,255,255,0.08)"></div><div class="a" style="left:1082px;top:254px;width:29px;height:9px;background:#1b1b1b;box-shadow:0 0 0 1px #2e2e2e"></div><div class="t" style="left:1116px;top:252px;font-size:13px;color:#e6e6e6">Current Color</div><svg class="a" style="left:1237px;top:253px" width="8" height="13"><path d="M1 5L4 1.5 7 5z M1 8L4 11.5 7 8z" fill="#9a9a9a"/></svg><div class="a" style="left:1073px;top:275px;width:102px;height:23px;border-radius:3px;background:#121212"></div><div class="t" style="left:1073px;top:280px;width:102px;text-align:center;font-size:12.8px;color:#e2e2e2">#FF000000</div><div class="a" style="left:1185px;top:275px;width:64px;height:22px;border-radius:3px;background:linear-gradient(#4c4c4c,#3b3b3b);box-shadow:0 0 0 1px #1a1a1a,inset 0 1px 0 rgba(255,255,255,0.08)"></div><div class="t" style="left:1200px;top:280px;font-size:12.6px;color:#e2e2e2">Hex</div><svg class="a" style="left:1237px;top:280px" width="8" height="13"><path d="M1 5L4 1.5 7 5z M1 8L4 11.5 7 8z" fill="#9a9a9a"/></svg><div class="t" style="right:209px;top:310px;font-size:11.7px;color:#cfcfcf;text-align:right;-webkit-text-stroke:0.2px #cfcfcf">Border Width</div><div class="a" style="left:1072px;top:305px;width:177px;height:23px;border-radius:3px;background:#121212;box-shadow:0 1px 0 rgba(255,255,255,0.04)"></div><div class="t" style="left:1074px;top:310px;font-size:12.3px;color:#d6d6d6">0</div><div class="t" style="right:209px;top:340px;font-size:11.7px;color:#cfcfcf;text-align:right;-webkit-text-stroke:0.2px #cfcfcf">Bounds</div><div class="a" style="left:1073px;top:334px;width:83px;height:22px;border-radius:3px;background:#121212"></div><div class="a" style="left:1137px;top:334px;width:19px;height:22px;border-radius:0 3px 3px 0;background:linear-gradient(#484848,#3a3a3a);box-shadow:inset 0 1px 0 rgba(255,255,255,0.06)"></div><div class="a" style="left:1137px;top:345px;width:19px;height:1px;background:#2a2a2a"></div><svg class="a" style="left:1142px;top:337px" width="9" height="16"><path d="M1 6L4.5 2 8 6z M1 10L4.5 14 8 10z" fill="#8a8a8a"/></svg><div class="t" style="left:1073px;top:338px;width:62px;text-align:center;font-size:12.3px;color:#d6d6d6">0.0</div><div class="a" style="left:1166px;top:334px;width:83px;height:22px;border-radius:3px;background:#121212"></div><div class="a" style="left:1230px;top:334px;width:19px;height:22px;border-radius:0 3px 3px 0;background:linear-gradient(#484848,#3a3a3a);box-shadow:inset 0 1px 0 rgba(255,255,255,0.06)"></div><div class="a" style="left:1230px;top:345px;width:19px;height:1px;background:#2a2a2a"></div><svg class="a" style="left:1235px;top:337px" width="9" height="16"><path d="M1 6L4.5 2 8 6z M1 10L4.5 14 8 10z" fill="#8a8a8a"/></svg><div class="t" style="left:1166px;top:338px;width:62px;text-align:center;font-size:12.3px;color:#d6d6d6">0.0</div><div class="t" style="left:1063px;top:359px;width:80px;text-align:center;font-size:11.7px;color:#cfcfcf;-webkit-text-stroke:0.2px #cfcfcf">X</div><div class="t" style="left:1157px;top:359px;width:80px;text-align:center;font-size:11.7px;color:#cfcfcf;-webkit-text-stroke:0.2px #cfcfcf">Y</div><div class="a" style="left:1073px;top:377px;width:83px;height:22px;border-radius:3px;background:#121212"></div><div class="a" style="left:1137px;top:377px;width:19px;height:22px;border-radius:0 3px 3px 0;background:linear-gradient(#484848,#3a3a3a);box-shadow:inset 0 1px 0 rgba(255,255,255,0.06)"></div><div class="a" style="left:1137px;top:388px;width:19px;height:1px;background:#2a2a2a"></div><svg class="a" style="left:1142px;top:380px" width="9" height="16"><path d="M1 6L4.5 2 8 6z M1 10L4.5 14 8 10z" fill="#8a8a8a"/></svg><div class="t" style="left:1073px;top:381px;width:62px;text-align:center;font-size:12.3px;color:#d6d6d6">320.0</div><div class="a" style="left:1166px;top:377px;width:83px;height:22px;border-radius:3px;background:#121212"></div><div class="a" style="left:1230px;top:377px;width:19px;height:22px;border-radius:0 3px 3px 0;background:linear-gradient(#484848,#3a3a3a);box-shadow:inset 0 1px 0 rgba(255,255,255,0.06)"></div><div class="a" style="left:1230px;top:388px;width:19px;height:1px;background:#2a2a2a"></div><svg class="a" style="left:1235px;top:380px" width="9" height="16"><path d="M1 6L4.5 2 8 6z M1 10L4.5 14 8 10z" fill="#8a8a8a"/></svg><div class="t" style="left:1166px;top:381px;width:62px;text-align:center;font-size:12.3px;color:#d6d6d6">480.0</div><div class="t" style="left:1063px;top:402px;width:80px;text-align:center;font-size:11.7px;color:#cfcfcf;-webkit-text-stroke:0.2px #cfcfcf">Width</div><div class="t" style="left:1157px;top:402px;width:80px;text-align:center;font-size:11.7px;color:#cfcfcf;-webkit-text-stroke:0.2px #cfcfcf">Height</div><div class="t" style="right:209px;top:427px;font-size:11.7px;color:#cfcfcf;text-align:right;-webkit-text-stroke:0.2px #cfcfcf">Contents Center</div><div class="a" style="left:1073px;top:421px;width:83px;height:22px;border-radius:3px;background:#121212"></div><div class="a" style="left:1137px;top:421px;width:19px;height:22px;border-radius:0 3px 3px 0;background:linear-gradient(#484848,#3a3a3a);box-shadow:inset 0 1px 0 rgba(255,255,255,0.06)"></div><div class="a" style="left:1137px;top:432px;width:19px;height:1px;background:#2a2a2a"></div><svg class="a" style="left:1142px;top:424px" width="9" height="16"><path d="M1 6L4.5 2 8 6z M1 10L4.5 14 8 10z" fill="#8a8a8a"/></svg><div class="t" style="left:1073px;top:425px;width:62px;text-align:center;font-size:12.3px;color:#d6d6d6">0.0</div><div class="a" style="left:1166px;top:421px;width:83px;height:22px;border-radius:3px;background:#121212"></div><div class="a" style="left:1230px;top:421px;width:19px;height:22px;border-radius:0 3px 3px 0;background:linear-gradient(#484848,#3a3a3a);box-shadow:inset 0 1px 0 rgba(255,255,255,0.06)"></div><div class="a" style="left:1230px;top:432px;width:19px;height:1px;background:#2a2a2a"></div><svg class="a" style="left:1235px;top:424px" width="9" height="16"><path d="M1 6L4.5 2 8 6z M1 10L4.5 14 8 10z" fill="#8a8a8a"/></svg><div class="t" style="left:1166px;top:425px;width:62px;text-align:center;font-size:12.3px;color:#d6d6d6">0.0</div><div class="t" style="left:1063px;top:446px;width:80px;text-align:center;font-size:11.7px;color:#cfcfcf;-webkit-text-stroke:0.2px #cfcfcf">X</div><div class="t" style="left:1157px;top:446px;width:80px;text-align:center;font-size:11.7px;color:#cfcfcf;-webkit-text-stroke:0.2px #cfcfcf">Y</div><div class="a" style="left:1073px;top:464px;width:83px;height:22px;border-radius:3px;background:#121212"></div><div class="a" style="left:1137px;top:464px;width:19px;height:22px;border-radius:0 3px 3px 0;background:linear-gradient(#484848,#3a3a3a);box-shadow:inset 0 1px 0 rgba(255,255,255,0.06)"></div><div class="a" style="left:1137px;top:475px;width:19px;height:1px;background:#2a2a2a"></div><svg class="a" style="left:1142px;top:467px" width="9" height="16"><path d="M1 6L4.5 2 8 6z M1 10L4.5 14 8 10z" fill="#8a8a8a"/></svg><div class="t" style="left:1073px;top:468px;width:62px;text-align:center;font-size:12.3px;color:#d6d6d6">1.0</div><div class="a" style="left:1166px;top:464px;width:83px;height:22px;border-radius:3px;background:#121212"></div><div class="a" style="left:1230px;top:464px;width:19px;height:22px;border-radius:0 3px 3px 0;background:linear-gradient(#484848,#3a3a3a);box-shadow:inset 0 1px 0 rgba(255,255,255,0.06)"></div><div class="a" style="left:1230px;top:475px;width:19px;height:1px;background:#2a2a2a"></div><svg class="a" style="left:1235px;top:467px" width="9" height="16"><path d="M1 6L4.5 2 8 6z M1 10L4.5 14 8 10z" fill="#8a8a8a"/></svg><div class="t" style="left:1166px;top:468px;width:62px;text-align:center;font-size:12.3px;color:#d6d6d6">1.0</div><div class="t" style="left:1063px;top:489px;width:80px;text-align:center;font-size:11.7px;color:#cfcfcf;-webkit-text-stroke:0.2px #cfcfcf">Width</div><div class="t" style="left:1157px;top:489px;width:80px;text-align:center;font-size:11.7px;color:#cfcfcf;-webkit-text-stroke:0.2px #cfcfcf">Height</div><div class="t" style="right:209px;top:514px;font-size:11.7px;color:#cfcfcf;text-align:right;-webkit-text-stroke:0.2px #cfcfcf">Contents Gravity</div><div class="a" style="left:1072px;top:508px;width:177px;height:23px;border-radius:3px;background:#121212;box-shadow:0 1px 0 rgba(255,255,255,0.04)"></div><div class="t" style="left:1074px;top:513px;font-size:12.3px;color:#d6d6d6">resize</div><div class="t" style="right:209px;top:544px;font-size:11.7px;color:#cfcfcf;text-align:right;-webkit-text-stroke:0.2px #cfcfcf">Contents Rect</div><div class="a" style="left:1073px;top:538px;width:83px;height:22px;border-radius:3px;background:#121212"></div><div class="a" style="left:1137px;top:538px;width:19px;height:22px;border-radius:0 3px 3px 0;background:linear-gradient(#484848,#3a3a3a);box-shadow:inset 0 1px 0 rgba(255,255,255,0.06)"></div><div class="a" style="left:1137px;top:549px;width:19px;height:1px;background:#2a2a2a"></div><svg class="a" style="left:1142px;top:541px" width="9" height="16"><path d="M1 6L4.5 2 8 6z M1 10L4.5 14 8 10z" fill="#8a8a8a"/></svg><div class="t" style="left:1073px;top:542px;width:62px;text-align:center;font-size:12.3px;color:#d6d6d6">0.0</div><div class="a" style="left:1166px;top:538px;width:83px;height:22px;border-radius:3px;background:#121212"></div><div class="a" style="left:1230px;top:538px;width:19px;height:22px;border-radius:0 3px 3px 0;background:linear-gradient(#484848,#3a3a3a);box-shadow:inset 0 1px 0 rgba(255,255,255,0.06)"></div><div class="a" style="left:1230px;top:549px;width:19px;height:1px;background:#2a2a2a"></div><svg class="a" style="left:1235px;top:541px" width="9" height="16"><path d="M1 6L4.5 2 8 6z M1 10L4.5 14 8 10z" fill="#8a8a8a"/></svg><div class="t" style="left:1166px;top:542px;width:62px;text-align:center;font-size:12.3px;color:#d6d6d6">0.0</div><div class="t" style="left:1063px;top:563px;width:80px;text-align:center;font-size:11.7px;color:#cfcfcf;-webkit-text-stroke:0.2px #cfcfcf">X</div><div class="t" style="left:1157px;top:563px;width:80px;text-align:center;font-size:11.7px;color:#cfcfcf;-webkit-text-stroke:0.2px #cfcfcf">Y</div><div class="a" style="left:1073px;top:581px;width:83px;height:22px;border-radius:3px;background:#121212"></div><div class="a" style="left:1137px;top:581px;width:19px;height:22px;border-radius:0 3px 3px 0;background:linear-gradient(#484848,#3a3a3a);box-shadow:inset 0 1px 0 rgba(255,255,255,0.06)"></div><div class="a" style="left:1137px;top:592px;width:19px;height:1px;background:#2a2a2a"></div><svg class="a" style="left:1142px;top:584px" width="9" height="16"><path d="M1 6L4.5 2 8 6z M1 10L4.5 14 8 10z" fill="#8a8a8a"/></svg><div class="t" style="left:1073px;top:585px;width:62px;text-align:center;font-size:12.3px;color:#d6d6d6">1.0</div><div class="a" style="left:1166px;top:581px;width:83px;height:22px;border-radius:3px;background:#121212"></div><div class="a" style="left:1230px;top:581px;width:19px;height:22px;border-radius:0 3px 3px 0;background:linear-gradient(#484848,#3a3a3a);box-shadow:inset 0 1px 0 rgba(255,255,255,0.06)"></div><div class="a" style="left:1230px;top:592px;width:19px;height:1px;background:#2a2a2a"></div><svg class="a" style="left:1235px;top:584px" width="9" height="16"><path d="M1 6L4.5 2 8 6z M1 10L4.5 14 8 10z" fill="#8a8a8a"/></svg><div class="t" style="left:1166px;top:585px;width:62px;text-align:center;font-size:12.3px;color:#d6d6d6">1.0</div><div class="t" style="left:1063px;top:606px;width:80px;text-align:center;font-size:11.7px;color:#cfcfcf;-webkit-text-stroke:0.2px #cfcfcf">Width</div><div class="t" style="left:1157px;top:606px;width:80px;text-align:center;font-size:11.7px;color:#cfcfcf;-webkit-text-stroke:0.2px #cfcfcf">Height</div><div class="t" style="right:209px;top:631px;font-size:11.7px;color:#cfcfcf;text-align:right;-webkit-text-stroke:0.2px #cfcfcf">Contents Scale</div><div class="a" style="left:1072px;top:626px;width:177px;height:23px;border-radius:3px;background:#121212;box-shadow:0 1px 0 rgba(255,255,255,0.04)"></div><div class="t" style="left:1074px;top:631px;font-size:12.3px;color:#d6d6d6">1</div><div class="t" style="right:209px;top:661px;font-size:11.7px;color:#cfcfcf;text-align:right;-webkit-text-stroke:0.2px #cfcfcf">Corner Radius</div><div class="a" style="left:1072px;top:656px;width:177px;height:23px;border-radius:3px;background:#121212;box-shadow:0 1px 0 rgba(255,255,255,0.04)"></div><div class="t" style="left:1074px;top:661px;font-size:12.3px;color:#d6d6d6">0</div><div class="a" style="left:1073px;top:689px;width:12px;height:12px;border-radius:2px;background:linear-gradient(#4a4a4a,#333);box-shadow:0 0 0 1px #161616"></div><svg class="a" style="left:1074px;top:689px" width="11" height="11"><path d="M2 5.5L4.5 8.5 9.5 1.5" fill="none" stroke="#b4b4b4" stroke-width="1.7"/></svg><div class="t" style="left:1089px;top:689px;font-size:12.8px;letter-spacing:0.1px;color:#d8d8d8;-webkit-text-stroke:0.1px #d8d8d8">Is Double Sided</div><div class="a" style="left:1073px;top:719px;width:12px;height:12px;border-radius:2px;background:linear-gradient(#4a4a4a,#333);box-shadow:0 0 0 1px #161616"></div><div class="t" style="left:1089px;top:719px;font-size:12.8px;letter-spacing:0.1px;color:#d8d8d8;-webkit-text-stroke:0.1px #d8d8d8">Draws Asynchronously</div><div class="t" style="right:209px;top:751px;font-size:11.7px;color:#cfcfcf;text-align:right;-webkit-text-stroke:0.2px #cfcfcf">Frame</div><div class="a" style="left:1073px;top:745px;width:83px;height:22px;border-radius:3px;background:#121212"></div><div class="a" style="left:1137px;top:745px;width:19px;height:22px;border-radius:0 3px 3px 0;background:linear-gradient(#484848,#3a3a3a);box-shadow:inset 0 1px 0 rgba(255,255,255,0.06)"></div><div class="a" style="left:1137px;top:756px;width:19px;height:1px;background:#2a2a2a"></div><svg class="a" style="left:1142px;top:748px" width="9" height="16"><path d="M1 6L4.5 2 8 6z M1 10L4.5 14 8 10z" fill="#8a8a8a"/></svg><div class="t" style="left:1073px;top:749px;width:62px;text-align:center;font-size:12.3px;color:#d6d6d6">0.0</div><div class="a" style="left:1166px;top:745px;width:83px;height:22px;border-radius:3px;background:#121212"></div><div class="a" style="left:1230px;top:745px;width:19px;height:22px;border-radius:0 3px 3px 0;background:linear-gradient(#484848,#3a3a3a);box-shadow:inset 0 1px 0 rgba(255,255,255,0.06)"></div><div class="a" style="left:1230px;top:756px;width:19px;height:1px;background:#2a2a2a"></div><svg class="a" style="left:1235px;top:748px" width="9" height="16"><path d="M1 6L4.5 2 8 6z M1 10L4.5 14 8 10z" fill="#8a8a8a"/></svg><div class="t" style="left:1166px;top:749px;width:62px;text-align:center;font-size:12.3px;color:#d6d6d6">0.0</div><div class="t" style="left:1063px;top:770px;width:80px;text-align:center;font-size:11.7px;color:#cfcfcf;-webkit-text-stroke:0.2px #cfcfcf">X</div><div class="t" style="left:1157px;top:770px;width:80px;text-align:center;font-size:11.7px;color:#cfcfcf;-webkit-text-stroke:0.2px #cfcfcf">Y</div><div class="a" style="left:1073px;top:788px;width:83px;height:22px;border-radius:3px;background:#121212"></div><div class="a" style="left:1137px;top:788px;width:19px;height:22px;border-radius:0 3px 3px 0;background:linear-gradient(#484848,#3a3a3a);box-shadow:inset 0 1px 0 rgba(255,255,255,0.06)"></div><div class="a" style="left:1137px;top:799px;width:19px;height:1px;background:#2a2a2a"></div><svg class="a" style="left:1142px;top:791px" width="9" height="16"><path d="M1 6L4.5 2 8 6z M1 10L4.5 14 8 10z" fill="#8a8a8a"/></svg><div class="t" style="left:1073px;top:792px;width:62px;text-align:center;font-size:12.3px;color:#d6d6d6">320.0</div><div class="a" style="left:1166px;top:788px;width:83px;height:22px;border-radius:3px;background:#121212"></div><div class="a" style="left:1230px;top:788px;width:19px;height:22px;border-radius:0 3px 3px 0;background:linear-gradient(#484848,#3a3a3a);box-shadow:inset 0 1px 0 rgba(255,255,255,0.06)"></div><div class="a" style="left:1230px;top:799px;width:19px;height:1px;background:#2a2a2a"></div><svg class="a" style="left:1235px;top:791px" width="9" height="16"><path d="M1 6L4.5 2 8 6z M1 10L4.5 14 8 10z" fill="#8a8a8a"/></svg><div class="t" style="left:1166px;top:792px;width:62px;text-align:center;font-size:12.3px;color:#d6d6d6">480.0</div><div class="t" style="left:1063px;top:813px;width:80px;text-align:center;font-size:11.7px;color:#cfcfcf;-webkit-text-stroke:0.2px #cfcfcf">Width</div><div class="t" style="left:1157px;top:813px;width:80px;text-align:center;font-size:11.7px;color:#cfcfcf;-webkit-text-stroke:0.2px #cfcfcf">Height</div><div class="a" style="left:1073px;top:836px;width:12px;height:12px;border-radius:2px;background:linear-gradient(#4a4a4a,#333);box-shadow:0 0 0 1px #161616"></div><div class="t" style="left:1089px;top:836px;font-size:12.8px;letter-spacing:0.1px;color:#d8d8d8;-webkit-text-stroke:0.1px #d8d8d8">Geometry is Flipped</div><div class="a" style="left:1073px;top:866px;width:12px;height:12px;border-radius:2px;background:linear-gradient(#4a4a4a,#333);box-shadow:0 0 0 1px #161616"></div><div class="t" style="left:1089px;top:866px;font-size:12.8px;letter-spacing:0.1px;color:#d8d8d8;-webkit-text-stroke:0.1px #d8d8d8">Is Hidden</div><div class="t" style="right:209px;top:898px;font-size:11.7px;color:#cfcfcf;text-align:right;-webkit-text-stroke:0.2px #cfcfcf">Magnification Filter</div><div class="a" style="left:1072px;top:893px;width:177px;height:23px;border-radius:3px;background:#121212;box-shadow:0 1px 0 rgba(255,255,255,0.04)"></div><div class="t" style="left:1074px;top:898px;font-size:12.3px;color:#d6d6d6">linear</div><div class="a" style="left:1073px;top:926px;width:12px;height:12px;border-radius:2px;background:linear-gradient(#4a4a4a,#333);box-shadow:0 0 0 1px #161616"></div><div class="t" style="left:1089px;top:926px;font-size:12.8px;letter-spacing:0.1px;color:#d8d8d8;-webkit-text-stroke:0.1px #d8d8d8">Masks to Bounds</div><div class="t" style="right:209px;top:958px;font-size:11.7px;color:#cfcfcf;text-align:right;-webkit-text-stroke:0.2px #cfcfcf">Minification Filter</div><div class="a" style="left:1072px;top:953px;width:177px;height:23px;border-radius:3px;background:#121212;box-shadow:0 1px 0 rgba(255,255,255,0.04)"></div><div class="t" style="left:1074px;top:958px;font-size:12.3px;color:#d6d6d6">linear</div><div class="t" style="right:209px;top:988px;font-size:11.7px;color:#cfcfcf;text-align:right;-webkit-text-stroke:0.2px #cfcfcf">Minification Filter Bias</div><div class="a" style="left:1072px;top:983px;width:177px;height:23px;border-radius:3px;background:#121212;box-shadow:0 1px 0 rgba(255,255,255,0.04)"></div><div class="t" style="left:1074px;top:988px;font-size:12.3px;color:#d6d6d6">0</div><div class="t" style="right:209px;top:1018px;font-size:11.7px;color:#cfcfcf;text-align:right;-webkit-text-stroke:0.2px #cfcfcf">Name</div><div class="a" style="left:1072px;top:1012px;width:177px;height:23px;border-radius:3px;background:#121212;box-shadow:0 1px 0 rgba(255,255,255,0.04)"></div><div class="t" style="left:1074px;top:1017px;font-size:12.3px;color:#d6d6d6"></div><div class="t" style="right:209px;top:1048px;font-size:11.7px;color:#cfcfcf;text-align:right;-webkit-text-stroke:0.2px #cfcfcf">Opacity</div><div class="a" style="left:1072px;top:1043px;width:177px;height:23px;border-radius:3px;background:#121212;box-shadow:0 1px 0 rgba(255,255,255,0.04)"></div><div class="t" style="left:1074px;top:1048px;font-size:12.3px;color:#d6d6d6">1</div><div class="a" style="left:1073px;top:1076px;width:12px;height:12px;border-radius:2px;background:linear-gradient(#4a4a4a,#333);box-shadow:0 0 0 1px #161616"></div><svg class="a" style="left:1074px;top:1076px" width="11" height="11"><path d="M2 5.5L4.5 8.5 9.5 1.5" fill="none" stroke="#b4b4b4" stroke-width="1.7"/></svg><div class="t" style="left:1089px;top:1076px;font-size:12.8px;letter-spacing:0.1px;color:#d8d8d8;-webkit-text-stroke:0.1px #d8d8d8">Is Opaque</div><div class="t" style="right:209px;top:1108px;font-size:11.7px;color:#cfcfcf;text-align:right;-webkit-text-stroke:0.2px #cfcfcf">Position</div><div class="a" style="left:1073px;top:1102px;width:83px;height:22px;border-radius:3px;background:#121212"></div><div class="a" style="left:1137px;top:1102px;width:19px;height:22px;border-radius:0 3px 3px 0;background:linear-gradient(#484848,#3a3a3a);box-shadow:inset 0 1px 0 rgba(255,255,255,0.06)"></div><div class="a" style="left:1137px;top:1113px;width:19px;height:1px;background:#2a2a2a"></div><svg class="a" style="left:1142px;top:1105px" width="9" height="16"><path d="M1 6L4.5 2 8 6z M1 10L4.5 14 8 10z" fill="#8a8a8a"/></svg><div class="t" style="left:1073px;top:1106px;width:62px;text-align:center;font-size:12.3px;color:#d6d6d6">160.0</div><div class="a" style="left:1166px;top:1102px;width:83px;height:22px;border-radius:3px;background:#121212"></div><div class="a" style="left:1230px;top:1102px;width:19px;height:22px;border-radius:0 3px 3px 0;background:linear-gradient(#484848,#3a3a3a);box-shadow:inset 0 1px 0 rgba(255,255,255,0.06)"></div><div class="a" style="left:1230px;top:1113px;width:19px;height:1px;background:#2a2a2a"></div><svg class="a" style="left:1235px;top:1105px" width="9" height="16"><path d="M1 6L4.5 2 8 6z M1 10L4.5 14 8 10z" fill="#8a8a8a"/></svg><div class="t" style="left:1166px;top:1106px;width:62px;text-align:center;font-size:12.3px;color:#d6d6d6">240.0</div><div class="t" style="left:1063px;top:1127px;width:80px;text-align:center;font-size:11.7px;color:#cfcfcf;-webkit-text-stroke:0.2px #cfcfcf">X</div><div class="t" style="left:1157px;top:1127px;width:80px;text-align:center;font-size:11.7px;color:#cfcfcf;-webkit-text-stroke:0.2px #cfcfcf">Y</div><div class="t" style="right:209px;top:1152px;font-size:11.7px;color:#cfcfcf;text-align:right;-webkit-text-stroke:0.2px #cfcfcf">Rasterization Scale</div><div class="a" style="left:1072px;top:1147px;width:177px;height:23px;border-radius:3px;background:#121212;box-shadow:0 1px 0 rgba(255,255,255,0.04)"></div><div class="t" style="left:1074px;top:1152px;font-size:12.3px;color:#d6d6d6">1</div><div class="t" style="right:209px;top:1182px;font-size:11.7px;color:#cfcfcf;text-align:right;-webkit-text-stroke:0.2px #cfcfcf">Shadow</div><div class="a" style="left:1073px;top:1177px;width:176px;height:22px;border-radius:3px;background:linear-gradient(#4c4c4c,#3b3b3b);box-shadow:0 0 0 1px #1a1a1a,inset 0 1px 0 rgba(255,255,255,0.08)"></div><div class="a" style="left:1082px;top:1183px;width:29px;height:9px;background:#1b1b1b;box-shadow:0 0 0 1px #2e2e2e"></div><div class="t" style="left:1116px;top:1181px;font-size:13px;color:#e6e6e6">Current Color</div><svg class="a" style="left:1237px;top:1182px" width="8" height="13"><path d="M1 5L4 1.5 7 5z M1 8L4 11.5 7 8z" fill="#9a9a9a"/></svg><div class="a" style="left:1073px;top:1204px;width:102px;height:23px;border-radius:3px;background:#121212"></div><div class="t" style="left:1073px;top:1209px;width:102px;text-align:center;font-size:12.8px;color:#e2e2e2">#FF000000</div><div class="a" style="left:1185px;top:1204px;width:64px;height:22px;border-radius:3px;background:linear-gradient(#4c4c4c,#3b3b3b);box-shadow:0 0 0 1px #1a1a1a,inset 0 1px 0 rgba(255,255,255,0.08)"></div><div class="t" style="left:1200px;top:1209px;font-size:12.6px;color:#e2e2e2">Hex</div><svg class="a" style="left:1237px;top:1209px" width="8" height="13"><path d="M1 5L4 1.5 7 5z M1 8L4 11.5 7 8z" fill="#9a9a9a"/></svg><div class="t" style="right:209px;top:1239px;font-size:11.7px;color:#cfcfcf;text-align:right;-webkit-text-stroke:0.2px #cfcfcf">Shadow Offset</div><div class="a" style="left:1073px;top:1233px;width:83px;height:22px;border-radius:3px;background:#121212"></div><div class="a" style="left:1137px;top:1233px;width:19px;height:22px;border-radius:0 3px 3px 0;background:linear-gradient(#484848,#3a3a3a);box-shadow:inset 0 1px 0 rgba(255,255,255,0.06)"></div><div class="a" style="left:1137px;top:1244px;width:19px;height:1px;background:#2a2a2a"></div><svg class="a" style="left:1142px;top:1236px" width="9" height="16"><path d="M1 6L4.5 2 8 6z M1 10L4.5 14 8 10z" fill="#8a8a8a"/></svg><div class="t" style="left:1073px;top:1237px;width:62px;text-align:center;font-size:12.3px;color:#d6d6d6">0.0</div><div class="a" style="left:1166px;top:1233px;width:83px;height:22px;border-radius:3px;background:#121212"></div><div class="a" style="left:1230px;top:1233px;width:19px;height:22px;border-radius:0 3px 3px 0;background:linear-gradient(#484848,#3a3a3a);box-shadow:inset 0 1px 0 rgba(255,255,255,0.06)"></div><div class="a" style="left:1230px;top:1244px;width:19px;height:1px;background:#2a2a2a"></div><svg class="a" style="left:1235px;top:1236px" width="9" height="16"><path d="M1 6L4.5 2 8 6z M1 10L4.5 14 8 10z" fill="#8a8a8a"/></svg><div class="t" style="left:1166px;top:1237px;width:62px;text-align:center;font-size:12.3px;color:#d6d6d6">-3.0</div><div class="t" style="left:1063px;top:1258px;width:80px;text-align:center;font-size:11.7px;color:#cfcfcf;-webkit-text-stroke:0.2px #cfcfcf">Width</div><div class="t" style="left:1157px;top:1258px;width:80px;text-align:center;font-size:11.7px;color:#cfcfcf;-webkit-text-stroke:0.2px #cfcfcf">Height</div><div class="t" style="right:209px;top:1283px;font-size:11.7px;color:#cfcfcf;text-align:right;-webkit-text-stroke:0.2px #cfcfcf">Shadow Opacity</div><div class="a" style="left:1072px;top:1277px;width:177px;height:23px;border-radius:3px;background:#121212;box-shadow:0 1px 0 rgba(255,255,255,0.04)"></div><div class="t" style="left:1074px;top:1282px;font-size:12.3px;color:#d6d6d6">0</div><div class="t" style="right:209px;top:1313px;font-size:11.7px;color:#cfcfcf;text-align:right;-webkit-text-stroke:0.2px #cfcfcf">Shadow Radius</div><div class="a" style="left:1072px;top:1307px;width:177px;height:23px;border-radius:3px;background:#121212;box-shadow:0 1px 0 rgba(255,255,255,0.04)"></div><div class="t" style="left:1074px;top:1312px;font-size:12.3px;color:#d6d6d6">3</div><div class="a" style="left:1073px;top:1341px;width:12px;height:12px;border-radius:2px;background:linear-gradient(#4a4a4a,#333);box-shadow:0 0 0 1px #161616"></div><div class="t" style="left:1089px;top:1341px;font-size:12.8px;letter-spacing:0.1px;color:#d8d8d8;-webkit-text-stroke:0.1px #d8d8d8">Should Rasterize</div><div class="t" style="right:209px;top:1373px;font-size:11.7px;color:#cfcfcf;text-align:right;-webkit-text-stroke:0.2px #cfcfcf">Z Position</div><div class="a" style="left:1072px;top:1367px;width:177px;height:23px;border-radius:3px;background:#121212;box-shadow:0 1px 0 rgba(255,255,255,0.04)"></div><div class="t" style="left:1074px;top:1372px;font-size:12.3px;color:#d6d6d6">0</div></body></html>
